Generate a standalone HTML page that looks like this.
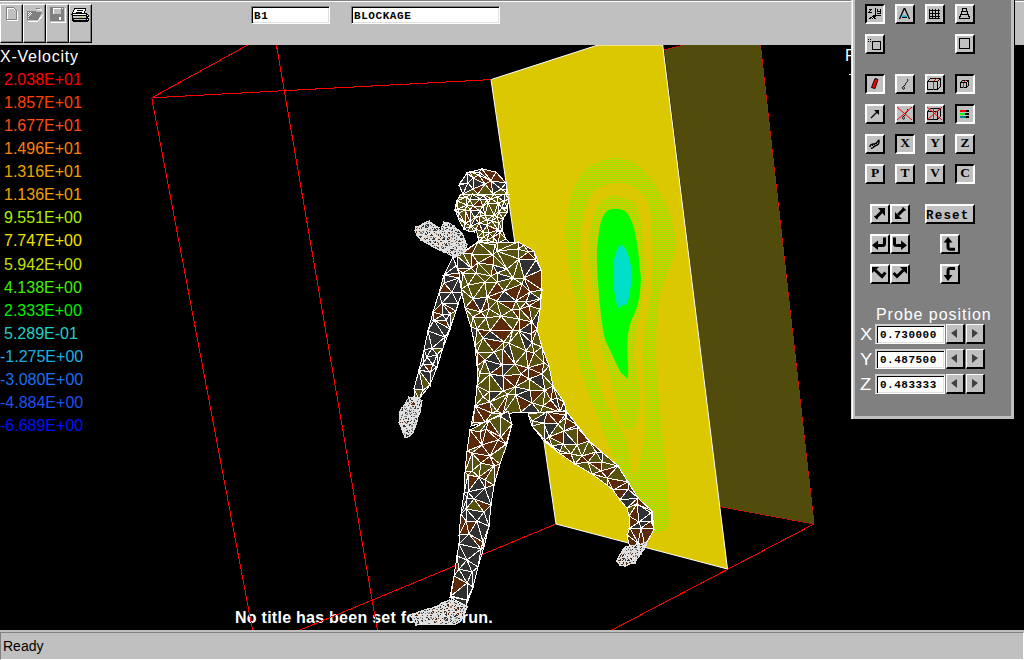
<!DOCTYPE html>
<html><head><meta charset="utf-8">
<style>
*{margin:0;padding:0;box-sizing:border-box}
html,body{width:1024px;height:660px;overflow:hidden;background:#000;font-family:"Liberation Sans",sans-serif}
.a{position:absolute}
#tb{left:0;top:0;width:1024px;height:45px;background:#c0c0c0;border-top:1px solid #808080}
#tb:before{content:"";position:absolute;left:0;top:0;width:1024px;height:1px;background:#fff}
.tbtn{position:absolute;top:3px;width:23px;height:39px;background:#c0c0c0;border-top:1px solid #fff;border-left:1px solid #fff;border-right:1px solid #000;border-bottom:1px solid #000}
.tbtn:after{content:"";position:absolute;right:0;bottom:0;left:0;top:0;border-right:1px solid #808080;border-bottom:1px solid #808080}
.fld{position:absolute;top:5px;height:18px;background:#fff;border-top:1px solid #808080;border-left:1px solid #808080;border-right:1px solid #fff;border-bottom:1px solid #fff;box-shadow:inset 1px 1px 0 #000,inset -1px -1px 0 #dfdfdf;font-family:"Liberation Mono",monospace;font-weight:bold;font-size:11px;line-height:14px;padding-left:2px;padding-top:2px;letter-spacing:0.57px;color:#000}
#sb{left:0;top:630px;width:1024px;height:30px;background:#c0c0c0;border-top:2px solid #c0c0c0}
#sbf{position:absolute;left:0;top:0;width:1024px;height:28px;border-top:1px solid #808080;border-left:1px solid #808080;border-right:1px solid #fff;border-bottom:1px solid #fff;font-size:14px;line-height:16px;padding:5px 0 0 2px;color:#000}
.lg{position:absolute;left:0;font-size:16px;line-height:18px;white-space:nowrap}
#pn{left:851px;top:0;width:163px;height:419px;background:#808080;border-left:1px solid #dfdfdf;border-top:1px solid #dfdfdf;border-right:3px solid #c0c0c0;border-bottom:3px solid #c0c0c0}
.b{position:absolute;width:20px;height:20px;background:#c0c0c0;border-top:2px solid #fff;border-left:2px solid #fff;border-right:2px solid #000;border-bottom:2px solid #000}
.p{border-top:2px solid #000;border-left:2px solid #000;border-right:2px solid #fff;border-bottom:2px solid #fff}
.lt{font-family:"Liberation Serif",serif;font-weight:bold;font-size:13px;line-height:16px;text-align:center;color:#000}
.pf{width:70px;height:20px;background:#fff;border-top:2px solid #d0d0d0;border-left:2px solid #d0d0d0;border-right:1px solid #fff;border-bottom:1px solid #fff;box-shadow:inset 1px 1px 0 #000,inset -1px -1px 0 #dfdfdf;font-family:"Liberation Mono",monospace;font-weight:bold;font-size:11px;line-height:16px;padding-left:3px;padding-top:1px;letter-spacing:0.5px;color:#000}
.sp{width:19px;height:20px;background:#c0c0c0;border-top:1px solid #fff;border-left:1px solid #fff;border-right:2px solid #000;border-bottom:2px solid #000}

</style></head><body>
<div class="a" style="left:235px;top:609px;color:#fff;font-weight:bold;font-size:16px;line-height:18px;letter-spacing:0.26px;white-space:nowrap">No title has been set for this run.</div>
<svg class="a" id="sc" width="1024" height="660" viewBox="0 0 1024 660" style="left:0;top:0">
<g shape-rendering="crispEdges" stroke="#ff0000" stroke-width="1" fill="none">
<path d="M151.7 97.8L247.8 45M151.7 97.8L491 79.6M151.7 97.8L252.5 630M276.4 45L377.3 630M300 630L556 524M612 630L814 524M720 506.6L814 524M760.4 45L814 524M664.3 50L684 45"/>
</g>
<polygon points="664.3,50 684,45 760.4,45 814,524 720,506.6" fill="#514c0c"/>
<pattern id="dth" patternUnits="userSpaceOnUse" width="2" height="2"><rect width="2" height="2" fill="#dcc800"/><rect width="1" height="1" fill="#98e000"/></pattern>
<clipPath id="yc"><polygon points="491,79.6 598,45 662.7,45 727.5,569 556,524"/></clipPath>
<polygon points="491,79.6 598,45 662.7,45 727.5,569 556,524" fill="#dcc800"/>
<g clip-path="url(#yc)">
<polygon fill="url(#dth)" points="613.0,158.0 615.8,157.9 618.7,158.1 621.5,158.4 624.4,158.9 627.2,159.7 629.9,160.6 632.5,161.7 635.0,163.0 637.4,164.5 639.7,166.2 641.9,168.2 644.0,170.3 646.1,172.6 648.1,175.0 650.1,177.5 652.0,180.0 653.9,182.7 655.9,185.5 657.7,188.4 659.6,191.5 661.3,194.6 663.0,197.8 664.6,200.9 666.0,204.0 667.3,207.1 668.6,210.4 669.7,213.7 670.8,217.0 671.7,220.2 672.6,223.4 673.3,226.3 674.0,229.0 674.6,231.4 675.1,233.6 675.5,235.6 675.8,237.5 676.0,239.3 676.1,241.1 676.1,243.0 676.0,245.0 675.8,247.1 675.5,249.2 675.1,251.3 674.6,253.4 674.0,255.5 673.4,257.7 672.7,259.8 672.0,262.0 671.3,264.2 670.4,266.4 669.6,268.6 668.6,270.8 667.7,273.1 666.8,275.3 665.8,277.6 665.0,280.0 664.2,282.4 663.3,284.8 662.5,287.3 661.7,289.8 660.9,292.3 660.2,294.9 659.6,297.4 659.0,300.0 658.6,302.5 658.2,305.0 657.9,307.5 657.7,309.9 657.5,312.5 657.3,315.2 657.2,318.0 657.0,321.0 656.8,324.3 656.6,327.8 656.5,331.5 656.3,335.2 656.2,339.1 656.1,342.8 656.0,346.5 656.0,350.0 656.0,353.3 656.1,356.5 656.2,359.7 656.3,362.8 656.5,365.8 656.6,368.8 656.8,371.9 657.0,375.0 657.2,378.0 657.4,380.7 657.5,383.3 657.8,385.9 658.0,388.8 658.3,392.0 658.6,395.7 659.0,400.0 659.5,405.1 660.1,410.7 660.7,416.9 661.4,423.4 662.1,430.2 662.8,436.9 663.4,443.6 664.0,450.0 664.6,456.4 665.2,463.1 665.7,469.8 666.3,476.5 666.8,483.0 667.3,489.2 667.7,494.9 668.0,500.0 668.3,504.5 668.7,508.7 669.0,512.4 669.2,515.8 669.3,518.8 669.2,521.5 668.8,523.9 668.0,526.0 666.8,527.9 665.1,529.5 663.2,530.9 661.0,531.9 658.7,532.5 656.4,532.8 654.1,532.6 652.0,532.0 650.0,530.9 648.0,529.2 646.0,527.2 643.9,524.7 641.9,521.9 639.9,518.8 638.0,515.5 636.0,512.0 634.1,508.2 632.2,504.0 630.3,499.5 628.5,494.8 626.7,489.8 624.8,484.9 622.9,479.9 621.0,475.0 619.0,470.1 617.0,465.2 615.0,460.1 613.0,455.1 611.0,450.0 609.0,444.9 607.0,439.9 605.0,435.0 603.0,430.0 601.0,425.0 599.0,419.9 596.9,414.8 595.0,409.9 593.2,405.3 591.5,400.9 590.0,397.0 588.7,393.6 587.7,390.7 586.7,388.1 585.9,385.8 585.2,383.5 584.5,381.2 583.8,378.7 583.0,376.0 582.2,373.2 581.3,370.4 580.5,367.7 579.7,364.8 578.9,361.7 578.2,358.3 577.6,354.4 577.0,350.0 576.6,344.8 576.3,338.9 576.2,332.5 576.1,325.8 575.9,318.9 575.8,312.2 575.5,305.8 575.0,300.0 574.3,294.6 573.5,289.5 572.5,284.7 571.5,279.9 570.5,275.4 569.5,270.9 568.7,266.4 568.0,262.0 567.5,257.6 567.0,253.3 566.6,249.1 566.3,245.0 566.1,240.9 566.0,236.9 565.9,232.9 566.0,229.0 566.2,225.0 566.5,221.0 566.9,217.0 567.4,213.1 567.9,209.3 568.6,205.7 569.3,202.2 570.0,199.0 570.8,196.1 571.6,193.4 572.5,190.8 573.5,188.5 574.5,186.3 575.6,184.1 576.8,182.1 578.0,180.0 579.2,178.0 580.5,176.0 581.7,174.1 583.1,172.3 584.5,170.6 586.1,169.0 587.9,167.4 590.0,166.0 592.4,164.6 595.0,163.3 597.9,162.0 600.9,160.8 604.0,159.8 607.1,158.9 610.1,158.3"/>
<polygon fill="#dcc800" points="613.0,183.0 615.2,182.7 617.4,182.6 619.6,182.6 621.8,182.8 623.9,183.2 626.0,183.6 628.0,184.3 630.0,185.0 631.9,185.9 633.9,187.0 635.8,188.3 637.7,189.8 639.5,191.3 641.1,192.8 642.7,194.4 644.0,196.0 645.2,197.6 646.2,199.1 647.0,200.8 647.8,202.4 648.4,204.2 649.0,206.0 649.5,207.9 650.0,210.0 650.5,212.0 650.8,213.9 651.1,215.7 651.4,217.8 651.6,220.0 651.7,222.8 651.9,226.0 652.0,230.0 652.1,234.9 652.3,240.6 652.4,246.9 652.5,253.7 652.5,260.6 652.4,267.4 652.3,274.0 652.0,280.0 651.6,285.6 651.0,291.2 650.3,296.6 649.5,301.8 648.7,306.9 647.9,311.8 647.1,316.5 646.5,321.0 645.9,325.2 645.3,329.2 644.7,332.9 644.1,336.4 643.6,339.9 643.2,343.2 642.8,346.6 642.6,350.0 642.5,353.4 642.6,356.8 642.8,360.1 643.0,363.3 643.3,366.5 643.6,369.7 643.8,372.9 644.0,376.0 644.2,379.0 644.3,381.8 644.5,384.4 644.6,387.1 644.8,389.9 644.9,392.9 645.0,396.2 645.0,400.0 645.0,404.3 645.1,409.0 645.2,414.0 645.2,419.3 645.1,424.7 644.9,430.0 644.6,435.1 644.0,440.0 643.2,445.1 642.1,450.7 640.8,456.6 639.4,462.2 638.0,467.2 636.6,471.3 635.2,474.0 634.0,475.0 633.0,473.9 632.0,471.1 631.2,466.8 630.4,461.6 629.5,455.8 628.5,450.0 627.4,444.6 626.0,440.0 624.3,435.9 622.3,431.8 620.1,427.6 617.9,423.6 615.6,419.8 613.5,416.2 611.6,412.9 610.0,410.0 608.8,407.8 608.0,406.4 607.4,405.4 606.9,404.6 606.5,403.6 605.9,402.2 605.1,400.1 604.0,397.0 602.5,392.8 600.6,387.7 598.6,382.0 596.4,375.8 594.2,369.3 592.2,362.8 590.4,356.3 589.0,350.0 588.0,343.8 587.2,337.5 586.7,331.0 586.3,324.6 586.0,318.1 585.7,311.9 585.4,305.8 585.0,300.0 584.5,294.4 583.9,288.9 583.3,283.5 582.8,278.2 582.2,273.2 581.7,268.5 581.3,264.1 581.0,260.0 580.8,256.4 580.6,253.4 580.5,250.7 580.5,248.2 580.5,245.9 580.6,243.5 580.8,240.9 581.0,238.0 581.3,234.7 581.6,231.2 581.9,227.5 582.4,223.8 582.9,220.1 583.5,216.5 584.2,213.1 585.0,210.0 585.9,207.1 586.9,204.4 588.0,201.7 589.1,199.2 590.4,196.9 591.8,194.8 593.3,192.8 595.0,191.0 596.9,189.4 599.0,188.0 601.2,186.8 603.6,185.7 606.0,184.8 608.4,184.0 610.7,183.4"/>
<polygon fill="url(#dth)" points="613.0,196.0 615.0,196.0 617.2,196.2 619.7,196.4 622.2,196.9 624.7,197.4 627.0,198.2 629.2,199.0 631.0,200.0 632.5,201.0 633.8,202.1 634.9,203.2 635.8,204.4 636.7,206.0 637.4,207.9 638.2,210.2 639.0,213.0 639.8,216.5 640.6,220.7 641.3,225.4 641.9,230.4 642.5,235.6 643.1,240.7 643.6,245.5 644.0,250.0 644.3,254.2 644.6,258.2 644.8,262.2 645.0,266.1 645.1,269.8 645.1,273.4 645.1,276.8 645.0,280.0 644.9,282.8 644.6,285.0 644.4,286.9 644.1,288.8 643.7,290.7 643.2,293.1 642.6,296.1 642.0,300.0 641.2,305.0 640.1,311.0 638.8,317.6 637.6,324.6 636.3,331.7 635.3,338.5 634.5,344.7 634.0,350.0 633.9,354.4 634.2,358.2 634.8,361.6 635.4,364.6 636.2,367.5 636.9,370.2 637.6,373.0 638.0,376.0 638.3,379.1 638.6,382.1 638.8,385.1 638.9,388.1 639.0,391.0 639.1,394.0 639.1,397.0 639.0,400.0 638.9,403.2 638.8,406.8 638.7,410.4 638.4,414.0 638.1,417.4 637.6,420.5 636.9,423.1 636.0,425.0 634.8,426.5 633.2,427.9 631.5,429.0 629.6,429.6 627.6,429.7 625.6,429.0 623.7,427.5 622.0,425.0 620.4,421.1 618.8,415.7 617.2,409.2 615.6,402.1 614.1,394.8 612.7,387.8 611.3,381.4 610.0,376.0 608.8,371.8 607.7,368.4 606.7,365.6 605.8,363.1 604.8,360.5 603.9,357.6 603.0,354.2 602.0,350.0 601.0,344.8 599.9,339.0 598.8,332.6 597.8,325.9 596.7,319.1 595.7,312.4 594.8,305.9 594.0,300.0 593.3,294.4 592.6,288.9 592.1,283.5 591.5,278.2 591.1,273.2 590.7,268.5 590.3,264.1 590.0,260.0 589.7,256.4 589.5,253.3 589.3,250.5 589.2,247.9 589.2,245.5 589.2,243.1 589.3,240.7 589.5,238.0 589.8,235.1 590.2,232.1 590.7,229.1 591.2,226.0 591.8,223.0 592.5,220.1 593.2,217.5 594.0,215.0 594.8,212.8 595.7,210.7 596.6,208.7 597.6,206.9 598.6,205.2 599.7,203.7 600.8,202.3 602.0,201.0 603.2,199.9 604.4,198.9 605.6,198.1 606.9,197.4 608.2,196.8 609.7,196.4 611.3,196.1"/>
<polygon fill="#00ff00" points="614.0,209.0 615.3,209.0 616.7,209.0 618.1,209.1 619.6,209.2 621.1,209.5 622.5,209.9 623.8,210.4 625.0,211.0 626.0,211.8 626.9,212.7 627.7,213.8 628.5,215.0 629.2,216.2 629.8,217.5 630.4,218.8 631.0,220.0 631.5,221.1 632.0,222.2 632.5,223.2 632.8,224.3 633.2,225.5 633.6,226.8 634.0,228.3 634.4,230.0 634.9,232.0 635.3,234.3 635.8,236.8 636.3,239.4 636.8,242.1 637.2,244.8 637.6,247.4 638.0,250.0 638.3,252.6 638.6,255.2 638.9,257.9 639.2,260.6 639.4,263.2 639.6,265.7 639.8,268.0 640.0,270.0 640.2,271.7 640.4,273.0 640.5,274.0 640.6,275.0 640.8,276.0 640.8,277.0 640.8,278.3 640.8,280.0 640.7,282.1 640.6,284.4 640.4,287.0 640.1,289.7 639.9,292.4 639.6,295.1 639.2,297.7 638.8,300.0 638.3,302.2 637.8,304.3 637.1,306.4 636.5,308.4 635.8,310.3 635.1,312.0 634.5,313.6 634.0,315.0 633.5,316.1 633.1,316.9 632.7,317.6 632.4,318.1 632.0,318.6 631.7,319.1 631.4,319.9 631.0,321.0 630.6,322.4 630.2,323.9 629.8,325.6 629.4,327.4 628.9,329.3 628.6,331.2 628.3,333.1 628.0,335.0 627.8,336.7 627.7,338.4 627.5,340.0 627.5,341.7 627.4,343.5 627.4,345.4 627.4,347.6 627.4,350.0 627.4,353.0 627.6,356.5 627.7,360.3 627.9,364.3 628.1,368.1 628.1,371.6 628.1,374.4 628.0,376.5 627.7,377.7 627.3,378.2 626.8,378.1 626.3,377.7 625.7,377.0 625.1,376.2 624.5,375.5 624.0,375.0 623.5,374.7 623.1,374.6 622.8,374.4 622.4,374.2 621.9,373.9 621.4,373.3 620.8,372.3 620.0,371.0 619.0,369.1 617.8,366.8 616.5,364.1 615.1,361.2 613.7,358.2 612.4,355.2 611.1,352.5 610.0,350.0 609.0,348.0 608.2,346.3 607.4,344.8 606.7,343.4 606.0,341.8 605.3,340.0 604.7,337.8 604.0,335.0 603.3,331.6 602.7,327.8 602.1,323.6 601.5,319.1 600.9,314.4 600.4,309.6 599.9,304.8 599.4,300.0 599.0,295.1 598.6,289.9 598.2,284.5 597.8,279.1 597.6,273.8 597.3,268.7 597.1,264.1 597.0,260.0 596.9,256.5 597.0,253.5 597.0,250.9 597.2,248.6 597.3,246.5 597.5,244.4 597.8,242.3 598.0,240.0 598.3,237.6 598.6,235.2 598.9,232.8 599.2,230.4 599.6,228.1 600.1,225.9 600.5,223.9 601.0,222.0 601.5,220.3 602.0,218.8 602.6,217.4 603.2,216.1 603.8,214.9 604.5,213.8 605.2,212.9 606.0,212.0 606.8,211.3 607.7,210.6 608.6,210.1 609.6,209.8 610.6,209.5 611.7,209.2 612.8,209.1"/>
<polygon fill="#00e0c8" points="621.0,245.0 621.6,245.1 622.2,245.4 622.8,245.8 623.5,246.4 624.2,247.2 624.8,248.0 625.4,249.0 626.0,250.0 626.6,251.2 627.1,252.5 627.7,253.9 628.2,255.5 628.7,257.1 629.2,258.8 629.6,260.4 630.0,262.0 630.4,263.6 630.7,265.1 631.0,266.7 631.3,268.3 631.6,269.9 631.7,271.5 631.9,273.2 631.9,275.0 631.9,276.9 631.7,278.8 631.5,280.9 631.3,282.9 631.0,285.0 630.6,287.0 630.3,288.9 630.0,290.8 629.7,292.6 629.4,294.5 629.0,296.3 628.7,298.1 628.3,299.8 627.9,301.3 627.5,302.6 627.0,303.6 626.5,304.3 625.9,304.7 625.2,304.9 624.6,304.9 623.9,304.9 623.2,304.8 622.6,304.9 622.0,305.0 621.5,305.4 621.0,306.0 620.5,306.7 620.0,307.4 619.5,308.0 619.1,308.3 618.6,308.1 618.1,307.5 617.6,306.3 617.0,304.5 616.4,302.3 615.9,299.8 615.3,297.3 614.8,294.7 614.4,292.2 614.0,290.0 613.7,288.0 613.5,286.1 613.4,284.2 613.3,282.3 613.2,280.5 613.2,278.7 613.2,276.9 613.2,275.0 613.2,273.1 613.2,271.1 613.3,269.2 613.4,267.2 613.5,265.3 613.6,263.4 613.8,261.6 614.0,260.0 614.3,258.5 614.6,257.0 614.9,255.7 615.3,254.4 615.7,253.2 616.1,252.0 616.6,251.0 617.0,250.0 617.4,249.1 617.9,248.2 618.4,247.3 618.9,246.6 619.4,245.9 619.9,245.4 620.4,245.1"/>
</g>
<polygon points="491,79.6 598,45 662.7,45 727.5,569 556,524" fill="none" stroke="#fff" stroke-width="1"/>

<g id="fig" shape-rendering="crispEdges"><path fill="#5a2a0a" d="M496 172L491 181L482 169ZM506 183L491 181L496 172ZM470 172L467 173L482 169ZM470 172L473 178L467 173ZM493 194L485 184L491 181ZM491 181L479 172L482 169ZM473 189L485 184L478 194ZM501 189L506 190L508 194ZM479 175L485 184L473 178ZM485 184L479 175L491 181Z"/><path fill="#303030" d="M467 173L460 183L459 185ZM468 183L463 194L459 185ZM460 183L468 183L459 185ZM468 183L460 183L467 173ZM473 178L468 183L467 173ZM501 189L491 181L506 183ZM501 189L493 194L491 181ZM479 172L470 172L482 169ZM468 183L473 189L463 194ZM485 184L473 189L473 178ZM473 189L468 183L473 178ZM506 190L506 183L508 194ZM506 190L501 189L506 183ZM479 172L479 175L470 172ZM479 175L479 172L491 181Z"/><path fill="#585210" d="M485 184L493 194L478 194ZM493 194L501 189L508 194ZM463 194L473 189L478 194ZM470 172L479 175L473 178Z"/><path fill="none" stroke="#ffffff" stroke-width="1" d="M496 172L491 181L482 169ZM506 183L491 181L496 172ZM470 172L467 173L482 169ZM470 172L473 178L467 173ZM493 194L485 184L491 181ZM491 181L479 172L482 169ZM473 189L485 184L478 194ZM501 189L506 190L508 194ZM479 175L485 184L473 178ZM485 184L479 175L491 181ZM467 173L460 183L459 185ZM468 183L463 194L459 185ZM460 183L468 183L459 185ZM468 183L460 183L467 173ZM473 178L468 183L467 173ZM501 189L491 181L506 183ZM501 189L493 194L491 181ZM479 172L470 172L482 169ZM468 183L473 189L463 194ZM485 184L473 189L473 178ZM473 189L468 183L473 178ZM506 190L506 183L508 194ZM506 190L501 189L506 183ZM479 172L479 175L470 172ZM479 175L479 172L491 181ZM485 184L493 194L478 194ZM493 194L501 189L508 194ZM463 194L473 189L478 194ZM470 172L479 175L473 178Z"/><path fill="#303030" d="M498 243L506 239L509 242ZM492 221L487 225L487 220ZM480 199L470 200L472 194ZM504 201L497 197L505 194ZM502 208L499 212L498 203ZM502 208L504 201L507 207ZM479 223L487 225L483 232ZM498 230L500 233L493 237ZM500 233L498 230L502 230ZM483 196L487 200L480 199ZM471 226L468 231L464 229ZM475 218L479 223L471 226ZM480 211L483 206L485 215ZM475 218L470 210L480 211Z"/><path fill="#585210" d="M507 209L507 207L509 199ZM507 207L504 201L509 199ZM509 199L504 201L505 194ZM458 209L457 201L467 205ZM484 237L478 237L483 232ZM478 237L484 237L479 241ZM479 241L487 240L487 243ZM484 237L487 240L479 241ZM498 243L493 242L493 237ZM493 242L498 243L487 243ZM493 242L487 240L493 237ZM487 240L493 242L487 243ZM498 243L500 233L506 239ZM467 205L470 200L473 206ZM480 216L485 215L487 220ZM488 203L491 199L498 203ZM494 194L491 199L483 194ZM470 200L480 199L473 206ZM497 197L504 201L498 203ZM491 199L497 197L498 203ZM458 209L456 204L457 201ZM456 204L459 197L457 201ZM458 209L459 213L455 210ZM503 219L499 212L507 212ZM503 219L502 230L499 223ZM492 221L497 217L499 223ZM503 219L497 217L499 212ZM502 208L507 209L507 212ZM499 212L502 208L507 212ZM507 209L502 208L507 207ZM504 201L502 208L498 203ZM479 223L480 216L487 220ZM487 225L479 223L487 220ZM498 230L487 225L492 221ZM498 230L492 221L499 223ZM502 230L498 230L499 223ZM472 194L466 197L461 194ZM470 200L466 197L472 194ZM466 197L459 197L461 194ZM466 197L470 200L467 205ZM457 201L466 197L467 205ZM459 197L466 197L457 201ZM480 211L485 215L480 216ZM483 196L472 194L483 194ZM483 196L480 199L472 194ZM487 200L483 196L483 194ZM497 197L494 194L505 194ZM494 194L491 199L494 194ZM494 194L497 197L491 199ZM474 232L468 231L471 226ZM465 210L458 209L467 205ZM465 210L459 213L458 209ZM459 220L465 223L464 229ZM465 210L465 223L459 213ZM465 223L471 226L464 229ZM494 215L492 221L487 220ZM494 215L497 217L492 221ZM485 215L494 215L487 220ZM497 217L494 215L499 212ZM494 215L485 215L488 203ZM494 215L488 203L498 203ZM499 212L494 215L498 203ZM478 237L476 229L483 232ZM476 229L474 232L471 226ZM479 223L476 229L471 226ZM470 221L475 218L471 226ZM475 218L480 211L480 216ZM489 233L498 230L493 237ZM487 225L489 233L483 232ZM489 233L484 237L483 232ZM489 233L487 240L484 237ZM485 215L483 206L488 203ZM483 206L487 200L488 203ZM487 200L483 206L480 199ZM483 206L480 211L473 206ZM458 217L465 223L459 220ZM459 213L458 217L455 210ZM470 210L475 218L470 221ZM470 210L467 205L473 206ZM470 210L465 210L467 205Z"/><path fill="#5a2a0a" d="M478 237L479 241L478 241ZM500 233L498 243L493 237ZM500 233L502 230L506 239ZM456 204L458 209L455 210ZM497 217L503 219L499 223ZM487 200L491 199L488 203ZM491 199L487 200L483 194ZM494 194L494 194L505 194ZM465 223L465 210L470 221ZM465 223L470 221L471 226ZM476 229L479 223L483 232ZM479 223L475 218L480 216ZM498 230L489 233L487 225ZM487 240L489 233L493 237ZM480 199L483 206L473 206ZM465 223L458 217L459 213ZM465 210L470 210L470 221ZM480 211L470 210L473 206Z"/><path fill="none" stroke="#ffffff" stroke-width="1" d="M498 243L506 239L509 242ZM492 221L487 225L487 220ZM480 199L470 200L472 194ZM504 201L497 197L505 194ZM502 208L499 212L498 203ZM502 208L504 201L507 207ZM479 223L487 225L483 232ZM498 230L500 233L493 237ZM500 233L498 230L502 230ZM483 196L487 200L480 199ZM471 226L468 231L464 229ZM475 218L479 223L471 226ZM480 211L483 206L485 215ZM475 218L470 210L480 211ZM507 209L507 207L509 199ZM507 207L504 201L509 199ZM509 199L504 201L505 194ZM458 209L457 201L467 205ZM484 237L478 237L483 232ZM478 237L484 237L479 241ZM479 241L487 240L487 243ZM484 237L487 240L479 241ZM498 243L493 242L493 237ZM493 242L498 243L487 243ZM493 242L487 240L493 237ZM487 240L493 242L487 243ZM498 243L500 233L506 239ZM467 205L470 200L473 206ZM480 216L485 215L487 220ZM488 203L491 199L498 203ZM494 194L491 199L483 194ZM470 200L480 199L473 206ZM497 197L504 201L498 203ZM491 199L497 197L498 203ZM458 209L456 204L457 201ZM456 204L459 197L457 201ZM458 209L459 213L455 210ZM503 219L499 212L507 212ZM503 219L502 230L499 223ZM492 221L497 217L499 223ZM503 219L497 217L499 212ZM502 208L507 209L507 212ZM499 212L502 208L507 212ZM507 209L502 208L507 207ZM504 201L502 208L498 203ZM479 223L480 216L487 220ZM487 225L479 223L487 220ZM498 230L487 225L492 221ZM498 230L492 221L499 223ZM502 230L498 230L499 223ZM472 194L466 197L461 194ZM470 200L466 197L472 194ZM466 197L459 197L461 194ZM466 197L470 200L467 205ZM457 201L466 197L467 205ZM459 197L466 197L457 201ZM480 211L485 215L480 216ZM483 196L472 194L483 194ZM483 196L480 199L472 194ZM487 200L483 196L483 194ZM497 197L494 194L505 194ZM494 194L491 199L494 194ZM494 194L497 197L491 199ZM474 232L468 231L471 226ZM465 210L458 209L467 205ZM465 210L459 213L458 209ZM459 220L465 223L464 229ZM465 210L465 223L459 213ZM465 223L471 226L464 229ZM494 215L492 221L487 220ZM494 215L497 217L492 221ZM485 215L494 215L487 220ZM497 217L494 215L499 212ZM494 215L485 215L488 203ZM494 215L488 203L498 203ZM499 212L494 215L498 203ZM478 237L476 229L483 232ZM476 229L474 232L471 226ZM479 223L476 229L471 226ZM470 221L475 218L471 226ZM475 218L480 211L480 216ZM489 233L498 230L493 237ZM487 225L489 233L483 232ZM489 233L484 237L483 232ZM489 233L487 240L484 237ZM485 215L483 206L488 203ZM483 206L487 200L488 203ZM487 200L483 206L480 199ZM483 206L480 211L473 206ZM458 217L465 223L459 220ZM459 213L458 217L455 210ZM470 210L475 218L470 221ZM470 210L467 205L473 206ZM470 210L465 210L467 205ZM478 237L479 241L478 241ZM500 233L498 243L493 237ZM500 233L502 230L506 239ZM456 204L458 209L455 210ZM497 217L503 219L499 223ZM487 200L491 199L488 203ZM491 199L487 200L483 194ZM494 194L494 194L505 194ZM465 223L465 210L470 221ZM465 223L470 221L471 226ZM476 229L479 223L483 232ZM479 223L475 218L480 216ZM498 230L489 233L487 225ZM487 240L489 233L493 237ZM480 199L483 206L473 206ZM465 223L458 217L459 213ZM465 210L470 210L470 221ZM480 211L470 210L473 206Z"/><path fill="#303030" d="M457 256L471 268L457 269ZM463 253L457 256L478 242ZM463 273L461 289L457 269ZM537 329L532 322L540 309ZM532 403L540 413L521 412ZM516 301L497 301L504 291ZM483 338L490 331L504 342ZM515 364L503 349L509 343ZM487 297L481 312L473 299ZM530 390L532 403L516 395ZM560 412L564 402L566 410ZM515 387L530 390L516 395ZM503 391L490 402L489 392ZM485 360L494 352L502 365ZM490 374L485 360L502 365ZM524 278L536 260L541 270ZM536 260L524 278L519 259ZM530 292L540 299L526 302ZM507 269L497 273L493 265ZM513 278L497 282L497 273ZM531 334L519 331L532 322ZM471 327L477 329L475 346ZM551 400L557 398L560 412ZM503 376L503 391L490 374ZM515 364L503 376L502 365ZM497 251L493 255L495 245ZM530 292L522 284L524 278ZM519 331L532 343L526 351ZM531 334L532 343L519 331ZM529 379L542 374L545 390Z"/><path fill="#585210" d="M483 338L477 352L475 346ZM521 412L503 414L516 395ZM483 338L494 352L477 352ZM463 253L471 268L457 256ZM463 253L472 254L471 268ZM461 289L463 273L468 285ZM532 322L529 306L540 309ZM473 317L471 327L465 308ZM461 289L473 299L465 308ZM473 299L461 289L468 285ZM485 282L473 299L468 285ZM503 414L508 394L516 395ZM473 422L485 422L471 426ZM477 366L480 373L477 386ZM490 374L489 392L477 386ZM480 373L490 374L477 386ZM487 297L473 299L485 282ZM476 273L485 282L468 285ZM476 273L463 273L471 268ZM463 273L476 273L468 285ZM498 242L495 245L478 242ZM493 255L472 254L478 242ZM495 245L493 255L478 242ZM487 297L497 301L489 309ZM520 309L532 322L519 319ZM520 309L516 301L526 302ZM516 301L520 309L512 310ZM494 352L503 349L502 365ZM503 349L494 352L504 342ZM509 343L503 349L504 342ZM509 343L519 331L526 351ZM515 364L509 343L526 351ZM528 368L515 364L526 351ZM481 312L473 317L465 308ZM564 402L557 398L553 386ZM490 402L508 394L497 411ZM508 394L515 387L516 395ZM490 374L503 391L489 392ZM490 402L503 391L508 394ZM503 391L515 387L508 394ZM477 366L485 360L480 373ZM485 360L490 374L480 373ZM494 352L485 360L477 352ZM497 282L487 297L485 282ZM476 273L491 276L485 282ZM491 276L497 282L485 282ZM497 282L491 276L497 273ZM540 299L530 292L542 290ZM528 252L518 249L524 245ZM518 249L528 252L519 259ZM493 255L478 263L472 254ZM491 276L478 263L493 265ZM478 263L491 276L476 273ZM493 255L507 269L493 265ZM497 282L513 278L504 291ZM524 278L513 278L519 259ZM513 278L507 269L519 259ZM507 269L513 278L497 273ZM497 301L501 316L489 309ZM501 316L497 301L512 310ZM501 316L512 310L519 319ZM513 330L509 343L504 342ZM513 330L519 331L509 343ZM513 330L501 316L519 319ZM473 317L477 329L471 327ZM477 329L483 338L475 346ZM529 379L545 390L530 390ZM515 387L529 379L530 390ZM490 402L483 397L489 392ZM483 397L490 402L475 406ZM489 392L483 397L477 386ZM483 397L475 406L477 386ZM492 413L490 402L497 411ZM503 414L492 413L497 411ZM492 413L503 414L485 422ZM503 376L515 364L521 374ZM498 242L497 251L495 245ZM497 251L507 269L493 255ZM497 251L498 242L518 242ZM518 249L497 251L518 242ZM497 251L518 249L519 259ZM507 269L497 251L519 259ZM513 278L522 284L504 291ZM522 284L513 278L524 278ZM501 316L486 318L489 309ZM486 318L501 316L490 331ZM486 318L481 312L489 309ZM477 329L486 318L490 331ZM486 318L477 329L473 317ZM532 343L537 329L542 347ZM545 390L543 406L532 403ZM551 400L543 406L545 390ZM532 403L543 406L540 413ZM543 406L560 412L540 413ZM545 390L542 374L553 386ZM542 374L549 366L553 386ZM542 374L544 363L549 366ZM544 363L534 353L542 347ZM534 353L532 343L542 347ZM532 343L534 353L526 351ZM534 353L544 363L528 368Z"/><path fill="#5a2a0a" d="M494 352L483 338L504 342ZM472 254L463 253L478 242ZM471 268L463 273L457 269ZM532 403L521 412L516 395ZM508 394L503 414L497 411ZM473 422L475 406L485 422ZM475 406L473 422L471 426ZM477 352L477 366L475 346ZM528 252L524 245L534 251ZM542 290L524 278L541 270ZM497 301L487 297L504 291ZM497 301L516 301L512 310ZM540 299L529 306L526 302ZM540 299L542 290L540 309ZM529 306L540 299L540 309ZM512 310L520 309L519 319ZM532 322L520 309L529 306ZM529 306L520 309L526 302ZM532 322L519 331L519 319ZM503 349L515 364L502 365ZM515 364L528 368L521 374ZM473 299L481 312L465 308ZM481 312L487 297L489 309ZM530 390L545 390L532 403ZM557 398L564 402L560 412ZM485 360L477 366L477 352ZM528 252L536 260L519 259ZM541 270L536 260L534 251ZM536 260L528 252L534 251ZM487 297L497 282L504 291ZM497 273L491 276L493 265ZM530 292L524 278L542 290ZM516 301L530 292L526 302ZM524 245L518 249L518 242ZM478 263L493 255L493 265ZM472 254L478 263L471 268ZM478 263L476 273L471 268ZM531 334L532 322L537 329ZM490 331L513 330L504 342ZM501 316L513 330L490 331ZM519 331L513 330L519 319ZM477 329L490 331L483 338ZM557 398L551 400L553 386ZM551 400L545 390L553 386ZM528 368L529 379L521 374ZM529 379L515 387L521 374ZM475 406L492 413L485 422ZM490 402L492 413L475 406ZM503 391L503 376L515 387ZM515 387L503 376L521 374ZM503 376L490 374L502 365ZM522 284L530 292L516 301ZM522 284L516 301L504 291ZM481 312L486 318L473 317ZM532 343L531 334L537 329ZM549 366L544 363L542 347ZM543 406L551 400L560 412ZM542 374L529 379L528 368ZM544 363L542 374L528 368ZM534 353L528 368L526 351Z"/><path fill="none" stroke="#ffffff" stroke-width="1" d="M457 256L471 268L457 269ZM463 253L457 256L478 242ZM463 273L461 289L457 269ZM537 329L532 322L540 309ZM532 403L540 413L521 412ZM516 301L497 301L504 291ZM483 338L490 331L504 342ZM515 364L503 349L509 343ZM487 297L481 312L473 299ZM530 390L532 403L516 395ZM560 412L564 402L566 410ZM515 387L530 390L516 395ZM503 391L490 402L489 392ZM485 360L494 352L502 365ZM490 374L485 360L502 365ZM524 278L536 260L541 270ZM536 260L524 278L519 259ZM530 292L540 299L526 302ZM507 269L497 273L493 265ZM513 278L497 282L497 273ZM531 334L519 331L532 322ZM471 327L477 329L475 346ZM551 400L557 398L560 412ZM503 376L503 391L490 374ZM515 364L503 376L502 365ZM497 251L493 255L495 245ZM530 292L522 284L524 278ZM519 331L532 343L526 351ZM531 334L532 343L519 331ZM529 379L542 374L545 390ZM483 338L477 352L475 346ZM521 412L503 414L516 395ZM483 338L494 352L477 352ZM463 253L471 268L457 256ZM463 253L472 254L471 268ZM461 289L463 273L468 285ZM532 322L529 306L540 309ZM473 317L471 327L465 308ZM461 289L473 299L465 308ZM473 299L461 289L468 285ZM485 282L473 299L468 285ZM503 414L508 394L516 395ZM473 422L485 422L471 426ZM477 366L480 373L477 386ZM490 374L489 392L477 386ZM480 373L490 374L477 386ZM487 297L473 299L485 282ZM476 273L485 282L468 285ZM476 273L463 273L471 268ZM463 273L476 273L468 285ZM498 242L495 245L478 242ZM493 255L472 254L478 242ZM495 245L493 255L478 242ZM487 297L497 301L489 309ZM520 309L532 322L519 319ZM520 309L516 301L526 302ZM516 301L520 309L512 310ZM494 352L503 349L502 365ZM503 349L494 352L504 342ZM509 343L503 349L504 342ZM509 343L519 331L526 351ZM515 364L509 343L526 351ZM528 368L515 364L526 351ZM481 312L473 317L465 308ZM564 402L557 398L553 386ZM490 402L508 394L497 411ZM508 394L515 387L516 395ZM490 374L503 391L489 392ZM490 402L503 391L508 394ZM503 391L515 387L508 394ZM477 366L485 360L480 373ZM485 360L490 374L480 373ZM494 352L485 360L477 352ZM497 282L487 297L485 282ZM476 273L491 276L485 282ZM491 276L497 282L485 282ZM497 282L491 276L497 273ZM540 299L530 292L542 290ZM528 252L518 249L524 245ZM518 249L528 252L519 259ZM493 255L478 263L472 254ZM491 276L478 263L493 265ZM478 263L491 276L476 273ZM493 255L507 269L493 265ZM497 282L513 278L504 291ZM524 278L513 278L519 259ZM513 278L507 269L519 259ZM507 269L513 278L497 273ZM497 301L501 316L489 309ZM501 316L497 301L512 310ZM501 316L512 310L519 319ZM513 330L509 343L504 342ZM513 330L519 331L509 343ZM513 330L501 316L519 319ZM473 317L477 329L471 327ZM477 329L483 338L475 346ZM529 379L545 390L530 390ZM515 387L529 379L530 390ZM490 402L483 397L489 392ZM483 397L490 402L475 406ZM489 392L483 397L477 386ZM483 397L475 406L477 386ZM492 413L490 402L497 411ZM503 414L492 413L497 411ZM492 413L503 414L485 422ZM503 376L515 364L521 374ZM498 242L497 251L495 245ZM497 251L507 269L493 255ZM497 251L498 242L518 242ZM518 249L497 251L518 242ZM497 251L518 249L519 259ZM507 269L497 251L519 259ZM513 278L522 284L504 291ZM522 284L513 278L524 278ZM501 316L486 318L489 309ZM486 318L501 316L490 331ZM486 318L481 312L489 309ZM477 329L486 318L490 331ZM486 318L477 329L473 317ZM532 343L537 329L542 347ZM545 390L543 406L532 403ZM551 400L543 406L545 390ZM532 403L543 406L540 413ZM543 406L560 412L540 413ZM545 390L542 374L553 386ZM542 374L549 366L553 386ZM542 374L544 363L549 366ZM544 363L534 353L542 347ZM534 353L532 343L542 347ZM532 343L534 353L526 351ZM534 353L544 363L528 368ZM494 352L483 338L504 342ZM472 254L463 253L478 242ZM471 268L463 273L457 269ZM532 403L521 412L516 395ZM508 394L503 414L497 411ZM473 422L475 406L485 422ZM475 406L473 422L471 426ZM477 352L477 366L475 346ZM528 252L524 245L534 251ZM542 290L524 278L541 270ZM497 301L487 297L504 291ZM497 301L516 301L512 310ZM540 299L529 306L526 302ZM540 299L542 290L540 309ZM529 306L540 299L540 309ZM512 310L520 309L519 319ZM532 322L520 309L529 306ZM529 306L520 309L526 302ZM532 322L519 331L519 319ZM503 349L515 364L502 365ZM515 364L528 368L521 374ZM473 299L481 312L465 308ZM481 312L487 297L489 309ZM530 390L545 390L532 403ZM557 398L564 402L560 412ZM485 360L477 366L477 352ZM528 252L536 260L519 259ZM541 270L536 260L534 251ZM536 260L528 252L534 251ZM487 297L497 282L504 291ZM497 273L491 276L493 265ZM530 292L524 278L542 290ZM516 301L530 292L526 302ZM524 245L518 249L518 242ZM478 263L493 255L493 265ZM472 254L478 263L471 268ZM478 263L476 273L471 268ZM531 334L532 322L537 329ZM490 331L513 330L504 342ZM501 316L513 330L490 331ZM519 331L513 330L519 319ZM477 329L490 331L483 338ZM557 398L551 400L553 386ZM551 400L545 390L553 386ZM528 368L529 379L521 374ZM529 379L515 387L521 374ZM475 406L492 413L485 422ZM490 402L492 413L475 406ZM503 391L503 376L515 387ZM515 387L503 376L521 374ZM503 376L490 374L502 365ZM522 284L530 292L516 301ZM522 284L516 301L504 291ZM481 312L486 318L473 317ZM532 343L531 334L537 329ZM549 366L544 363L542 347ZM543 406L551 400L560 412ZM542 374L529 379L528 368ZM544 363L542 374L528 368ZM534 353L528 368L526 351Z"/><path fill="#585210" d="M414 389L419 399L414 397ZM423 390L419 370L430 385ZM414 389L423 390L419 399ZM444 275L444 283L439 293ZM432 348L443 348L437 355ZM450 328L450 314L456 311Z"/><path fill="#303030" d="M423 390L414 389L419 370ZM419 399L423 390L430 385ZM446 320L450 328L450 329ZM450 328L456 311L450 329ZM456 266L444 275L453 257ZM444 275L456 266L459 273ZM433 312L434 320L428 331ZM434 320L445 337L428 331ZM445 337L434 320L450 329ZM442 303L433 312L439 293ZM442 303L458 304L456 311ZM432 348L424 350L428 331ZM445 337L432 348L428 331ZM419 370L430 372L430 385ZM430 372L437 367L430 385ZM427 357L432 348L437 355ZM432 348L427 357L424 350ZM443 348L437 367L437 355ZM443 348L432 348L445 337ZM443 348L445 337L450 329ZM459 278L444 283L444 275ZM452 292L442 303L439 293ZM452 292L459 278L462 293ZM459 278L452 292L444 283ZM458 304L452 292L462 293ZM442 303L452 292L458 304ZM450 314L450 328L446 320ZM430 372L433 365L437 367ZM437 367L433 365L437 355ZM433 365L427 357L437 355ZM450 314L443 315L442 303ZM443 315L450 314L446 320ZM434 320L443 315L446 320ZM423 364L430 372L419 370ZM433 365L423 364L427 357ZM424 350L423 364L419 370ZM427 357L423 364L424 350Z"/><path fill="#5a2a0a" d="M459 273L456 266L453 257ZM434 320L446 320L450 329ZM459 278L459 273L462 293ZM459 278L444 275L459 273ZM444 283L452 292L439 293ZM450 314L442 303L456 311ZM442 303L443 315L433 312ZM443 315L434 320L433 312ZM423 364L433 365L430 372Z"/><path fill="none" stroke="#ffffff" stroke-width="1" d="M414 389L419 399L414 397ZM423 390L419 370L430 385ZM414 389L423 390L419 399ZM444 275L444 283L439 293ZM432 348L443 348L437 355ZM450 328L450 314L456 311ZM423 390L414 389L419 370ZM419 399L423 390L430 385ZM446 320L450 328L450 329ZM450 328L456 311L450 329ZM456 266L444 275L453 257ZM444 275L456 266L459 273ZM433 312L434 320L428 331ZM434 320L445 337L428 331ZM445 337L434 320L450 329ZM442 303L433 312L439 293ZM442 303L458 304L456 311ZM432 348L424 350L428 331ZM445 337L432 348L428 331ZM419 370L430 372L430 385ZM430 372L437 367L430 385ZM427 357L432 348L437 355ZM432 348L427 357L424 350ZM443 348L437 367L437 355ZM443 348L432 348L445 337ZM443 348L445 337L450 329ZM459 278L444 283L444 275ZM452 292L442 303L439 293ZM452 292L459 278L462 293ZM459 278L452 292L444 283ZM458 304L452 292L462 293ZM442 303L452 292L458 304ZM450 314L450 328L446 320ZM430 372L433 365L437 367ZM437 367L433 365L437 355ZM433 365L427 357L437 355ZM450 314L443 315L442 303ZM443 315L450 314L446 320ZM434 320L443 315L446 320ZM423 364L430 372L419 370ZM433 365L423 364L427 357ZM424 350L423 364L419 370ZM427 357L423 364L424 350ZM459 273L456 266L453 257ZM434 320L446 320L450 329ZM459 278L459 273L462 293ZM459 278L444 275L459 273ZM444 283L452 292L439 293ZM450 314L442 303L456 311ZM442 303L443 315L433 312ZM443 315L434 320L433 312ZM423 364L433 365L430 372Z"/><path fill="#303030" d="M500 416L508 411L512 424ZM484 512L491 505L489 526ZM494 485L491 505L485 488ZM467 600L466 606L450 597ZM477 521L484 512L489 526ZM484 547L483 542L489 526ZM483 542L477 521L489 526ZM477 521L483 542L469 534ZM478 567L481 549L484 547ZM481 549L483 542L484 547ZM454 576L451 596L450 597ZM451 596L467 600L450 597ZM459 544L459 535L469 534ZM481 549L459 544L469 534ZM486 429L480 432L489 420ZM479 477L485 480L485 488ZM477 521L466 509L484 512ZM466 509L466 521L461 514ZM466 521L466 509L477 521ZM467 560L481 549L478 567ZM459 544L467 560L457 556ZM467 560L459 544L481 549ZM472 572L478 567L473 587ZM472 572L467 560L478 567ZM467 583L472 572L473 587ZM467 600L467 583L473 587ZM451 596L467 583L467 600ZM472 572L459 569L467 560ZM467 560L459 569L457 556ZM459 569L467 583L454 576ZM467 583L459 569L472 572ZM468 492L479 477L485 488ZM474 499L468 492L485 488ZM491 505L474 499L485 488ZM468 492L464 493L468 475ZM474 499L467 498L468 492ZM467 498L464 493L468 492ZM467 498L474 499L466 509ZM467 498L466 509L461 514ZM464 493L467 498L461 514Z"/><path fill="#585210" d="M500 416L489 420L508 411ZM467 600L473 587L466 606ZM489 420L480 432L470 430ZM494 485L485 480L494 466ZM472 471L465 472L472 453ZM490 456L507 444L500 464ZM490 456L506 444L507 444ZM481 463L472 471L472 453ZM481 463L479 477L472 471ZM479 477L481 463L494 466ZM467 451L482 445L472 453ZM479 477L468 475L472 471ZM501 437L489 420L500 416ZM501 437L500 416L512 424ZM466 509L474 499L484 512ZM468 475L464 493L465 472Z"/><path fill="#5a2a0a" d="M500 464L494 485L494 466ZM507 444L506 444L512 424ZM485 480L494 485L485 488ZM465 472L467 451L472 453ZM483 542L481 549L469 534ZM466 521L459 535L461 514ZM459 535L466 521L469 534ZM466 521L477 521L469 534ZM490 456L500 464L494 466ZM481 463L490 456L494 466ZM490 456L481 463L472 453ZM485 480L479 477L494 466ZM482 445L490 456L472 453ZM486 429L482 445L480 432ZM482 445L467 451L470 430ZM480 432L482 445L470 430ZM468 475L465 472L472 471ZM467 583L451 596L454 576ZM459 569L454 576L457 556ZM498 440L482 445L486 429ZM490 456L498 440L506 444ZM482 445L498 440L490 456ZM468 492L468 475L479 477ZM501 437L498 440L486 429ZM501 437L486 429L489 420ZM506 444L501 437L512 424ZM498 440L501 437L506 444ZM474 499L491 505L484 512Z"/><path fill="none" stroke="#ffffff" stroke-width="1" d="M500 416L508 411L512 424ZM484 512L491 505L489 526ZM494 485L491 505L485 488ZM467 600L466 606L450 597ZM477 521L484 512L489 526ZM484 547L483 542L489 526ZM483 542L477 521L489 526ZM477 521L483 542L469 534ZM478 567L481 549L484 547ZM481 549L483 542L484 547ZM454 576L451 596L450 597ZM451 596L467 600L450 597ZM459 544L459 535L469 534ZM481 549L459 544L469 534ZM486 429L480 432L489 420ZM479 477L485 480L485 488ZM477 521L466 509L484 512ZM466 509L466 521L461 514ZM466 521L466 509L477 521ZM467 560L481 549L478 567ZM459 544L467 560L457 556ZM467 560L459 544L481 549ZM472 572L478 567L473 587ZM472 572L467 560L478 567ZM467 583L472 572L473 587ZM467 600L467 583L473 587ZM451 596L467 583L467 600ZM472 572L459 569L467 560ZM467 560L459 569L457 556ZM459 569L467 583L454 576ZM467 583L459 569L472 572ZM468 492L479 477L485 488ZM474 499L468 492L485 488ZM491 505L474 499L485 488ZM468 492L464 493L468 475ZM474 499L467 498L468 492ZM467 498L464 493L468 492ZM467 498L474 499L466 509ZM467 498L466 509L461 514ZM464 493L467 498L461 514ZM500 416L489 420L508 411ZM467 600L473 587L466 606ZM489 420L480 432L470 430ZM494 485L485 480L494 466ZM472 471L465 472L472 453ZM490 456L507 444L500 464ZM490 456L506 444L507 444ZM481 463L472 471L472 453ZM481 463L479 477L472 471ZM479 477L481 463L494 466ZM467 451L482 445L472 453ZM479 477L468 475L472 471ZM501 437L489 420L500 416ZM501 437L500 416L512 424ZM466 509L474 499L484 512ZM468 475L464 493L465 472ZM500 464L494 485L494 466ZM507 444L506 444L512 424ZM485 480L494 485L485 488ZM465 472L467 451L472 453ZM483 542L481 549L469 534ZM466 521L459 535L461 514ZM459 535L466 521L469 534ZM466 521L477 521L469 534ZM490 456L500 464L494 466ZM481 463L490 456L494 466ZM490 456L481 463L472 453ZM485 480L479 477L494 466ZM482 445L490 456L472 453ZM486 429L482 445L480 432ZM482 445L467 451L470 430ZM480 432L482 445L470 430ZM468 475L465 472L472 471ZM467 583L451 596L454 576ZM459 569L454 576L457 556ZM498 440L482 445L486 429ZM490 456L498 440L506 444ZM482 445L498 440L490 456ZM468 492L468 475L479 477ZM501 437L498 440L486 429ZM501 437L486 429L489 420ZM506 444L501 437L512 424ZM498 440L501 437L506 444ZM474 499L491 505L484 512Z"/><path fill="#585210" d="M532 421L532 426L528 414ZM532 421L544 423L532 426ZM547 412L532 421L528 414ZM575 464L588 462L592 474ZM552 446L559 453L544 441ZM629 516L627 508L637 504ZM651 521L651 513L654 529ZM618 466L602 462L603 453ZM607 478L618 466L628 482ZM607 478L607 485L592 474ZM545 440L552 446L544 441ZM544 423L545 440L532 426ZM601 471L602 462L618 466ZM588 462L601 471L592 474ZM558 424L564 431L549 437ZM571 454L582 456L575 464ZM582 456L571 454L577 445ZM589 441L582 456L577 445ZM571 454L563 444L577 445ZM563 444L571 454L560 451ZM563 444L552 446L549 437ZM566 418L564 431L558 424ZM589 441L596 452L582 456ZM596 452L602 462L588 462ZM564 431L578 428L577 445Z"/><path fill="#5a2a0a" d="M645 546L641 528L654 529ZM638 543L627 535L630 528ZM641 528L638 543L630 528ZM638 543L641 528L645 546ZM638 543L645 546L630 549ZM627 535L638 543L630 549ZM638 498L628 489L628 482ZM627 508L638 498L637 504ZM628 489L613 490L628 482ZM613 490L628 489L620 500ZM641 528L651 521L654 529ZM651 513L652 511L654 529ZM652 511L651 513L637 504ZM638 498L652 511L637 504ZM613 490L607 478L628 482ZM607 478L613 490L607 485ZM552 446L545 440L549 437ZM532 426L545 440L544 441ZM629 516L639 522L630 528ZM639 522L629 516L637 504ZM552 446L560 451L559 453ZM582 456L588 462L575 464ZM547 412L558 424L544 423ZM565 415L547 412L566 411ZM565 415L558 424L547 412ZM607 478L601 471L618 466ZM601 471L607 478L592 474ZM602 462L601 471L588 462ZM559 453L571 454L575 464ZM560 451L571 454L559 453ZM564 431L563 444L549 437ZM566 418L565 415L566 411ZM582 456L596 452L588 462ZM596 452L589 441L603 453ZM578 428L589 441L577 445ZM566 418L577 425L564 431Z"/><path fill="#303030" d="M547 412L544 423L532 421ZM628 489L638 498L620 500ZM638 498L627 508L620 500ZM549 437L545 440L544 423ZM639 522L651 521L641 528ZM639 522L641 528L630 528ZM651 521L639 522L651 513ZM651 513L639 522L637 504ZM558 424L549 437L544 423ZM563 444L564 431L577 445ZM563 444L560 451L552 446ZM565 415L566 418L558 424ZM602 462L596 452L603 453ZM577 425L578 428L564 431ZM577 425L566 418L566 411ZM578 428L577 425L589 441Z"/><path fill="none" stroke="#ffffff" stroke-width="1" d="M532 421L532 426L528 414ZM532 421L544 423L532 426ZM547 412L532 421L528 414ZM575 464L588 462L592 474ZM552 446L559 453L544 441ZM629 516L627 508L637 504ZM651 521L651 513L654 529ZM618 466L602 462L603 453ZM607 478L618 466L628 482ZM607 478L607 485L592 474ZM545 440L552 446L544 441ZM544 423L545 440L532 426ZM601 471L602 462L618 466ZM588 462L601 471L592 474ZM558 424L564 431L549 437ZM571 454L582 456L575 464ZM582 456L571 454L577 445ZM589 441L582 456L577 445ZM571 454L563 444L577 445ZM563 444L571 454L560 451ZM563 444L552 446L549 437ZM566 418L564 431L558 424ZM589 441L596 452L582 456ZM596 452L602 462L588 462ZM564 431L578 428L577 445ZM645 546L641 528L654 529ZM638 543L627 535L630 528ZM641 528L638 543L630 528ZM638 543L641 528L645 546ZM638 543L645 546L630 549ZM627 535L638 543L630 549ZM638 498L628 489L628 482ZM627 508L638 498L637 504ZM628 489L613 490L628 482ZM613 490L628 489L620 500ZM641 528L651 521L654 529ZM651 513L652 511L654 529ZM652 511L651 513L637 504ZM638 498L652 511L637 504ZM613 490L607 478L628 482ZM607 478L613 490L607 485ZM552 446L545 440L549 437ZM532 426L545 440L544 441ZM629 516L639 522L630 528ZM639 522L629 516L637 504ZM552 446L560 451L559 453ZM582 456L588 462L575 464ZM547 412L558 424L544 423ZM565 415L547 412L566 411ZM565 415L558 424L547 412ZM607 478L601 471L618 466ZM601 471L607 478L592 474ZM602 462L601 471L588 462ZM559 453L571 454L575 464ZM560 451L571 454L559 453ZM564 431L563 444L549 437ZM566 418L565 415L566 411ZM582 456L596 452L588 462ZM596 452L589 441L603 453ZM578 428L589 441L577 445ZM566 418L577 425L564 431ZM547 412L544 423L532 421ZM628 489L638 498L620 500ZM638 498L627 508L620 500ZM549 437L545 440L544 423ZM639 522L651 521L641 528ZM639 522L641 528L630 528ZM651 521L639 522L651 513ZM651 513L639 522L637 504ZM558 424L549 437L544 423ZM563 444L564 431L577 445ZM563 444L560 451L552 446ZM565 415L566 418L558 424ZM602 462L596 452L603 453ZM577 425L578 428L564 431ZM577 425L566 418L566 411ZM578 428L577 425L589 441Z"/><path fill="#5a2a0a" d="M466 248L463 246L467 245ZM412 614L410 615L411 615ZM463 246L466 243L467 245ZM402 420L401 425L399 422ZM401 425L401 427L399 422ZM638 555L634 554L635 551ZM624 565L625 566L620 565ZM621 562L619 564L617 561ZM626 561L630 564L625 566ZM624 565L626 561L625 566ZM407 404L410 405L409 409ZM406 402L407 404L403 407ZM410 402L414 401L410 405ZM445 223L444 222L449 223ZM404 429L407 429L405 432ZM413 433L411 434L410 429ZM403 432L404 429L405 432ZM449 603L445 603L447 601ZM644 546L639 546L641 544ZM440 605L437 606L442 603ZM439 613L435 610L439 610ZM443 610L439 613L439 610ZM413 619L414 621L416 624ZM414 616L412 617L412 614ZM449 624L451 624L455 624ZM621 558L623 552L625 556ZM621 558L621 562L617 561ZM622 563L624 565L620 565ZM414 401L416 405L410 405ZM419 402L416 405L416 402ZM416 411L412 415L412 412ZM419 398L417 399L414 397ZM445 223L444 227L442 226ZM450 228L450 231L447 230ZM463 242L465 242L463 246ZM461 248L459 247L463 246ZM461 248L465 250L464 252ZM426 243L428 241L431 245ZM428 241L426 243L427 241ZM417 422L417 421L418 417ZM403 432L402 428L404 429ZM402 428L401 427L402 427ZM434 610L437 607L435 610ZM437 607L434 610L432 608ZM451 611L447 611L449 608ZM459 612L456 607L459 606ZM445 605L449 603L449 608ZM451 600L449 603L449 600ZM451 604L451 600L453 601ZM462 604L458 603L463 604ZM462 604L459 606L458 603ZM641 544L637 544L635 545ZM639 546L637 544L641 544ZM639 549L637 544L639 546ZM638 552L639 549L641 554ZM630 564L632 562L635 563ZM632 557L632 562L629 558ZM447 611L444 615L443 610ZM416 613L420 616L414 616ZM424 614L425 617L423 617ZM427 620L425 617L429 616ZM430 611L426 611L427 609ZM624 561L622 563L621 562ZM624 561L626 561L624 565ZM626 549L624 549L625 547ZM624 549L625 551L623 552ZM630 548L626 549L630 546ZM420 412L418 412L420 409ZM418 412L416 411L420 409ZM416 411L418 412L412 415ZM459 239L463 242L457 242ZM459 239L455 240L459 238ZM461 233L462 233L464 238ZM441 245L443 242L444 246ZM449 252L449 248L452 253ZM424 228L424 230L421 230ZM424 230L424 228L429 228ZM415 231L418 229L417 235ZM416 227L415 230L415 226ZM416 227L418 229L415 230ZM423 239L425 237L427 241ZM401 425L404 423L402 427ZM407 427L404 423L408 425ZM407 427L404 429L402 427ZM447 611L450 614L448 617ZM451 611L450 614L447 611ZM457 602L453 604L453 601ZM456 607L453 604L457 605ZM453 608L453 604L456 607ZM453 604L453 608L451 604ZM630 556L633 551L634 554ZM632 562L634 560L635 563ZM433 624L437 623L438 624ZM437 623L433 624L434 620ZM425 623L428 622L427 624ZM434 610L435 614L430 611ZM420 615L416 613L421 611ZM425 617L427 614L429 616ZM446 622L444 624L444 621ZM421 406L418 406L419 402ZM401 412L403 413L400 415ZM404 411L401 412L400 411ZM450 235L446 232L450 231ZM453 240L453 234L456 236ZM455 249L450 247L454 246ZM463 242L463 240L465 242ZM446 242L443 242L446 241ZM446 242L450 240L450 243ZM455 257L450 255L452 253ZM419 234L418 236L417 235ZM418 236L419 234L423 235ZM419 234L418 229L421 230ZM418 229L419 234L417 235ZM410 428L408 425L412 422ZM453 619L449 618L453 618ZM454 611L453 608L456 607ZM460 622L461 619L463 617ZM461 615L459 616L459 612ZM444 607L445 605L449 608ZM444 607L447 611L443 610ZM644 549L644 546L647 544ZM642 549L644 549L641 554ZM442 614L443 616L440 617ZM443 616L441 619L440 617ZM441 619L443 616L444 621ZM443 624L444 624L438 624ZM444 624L443 624L444 621ZM443 624L441 622L444 621ZM438 621L437 617L440 617ZM438 621L437 623L434 620ZM437 617L438 621L434 620ZM430 614L434 616L429 616ZM403 413L400 416L400 415ZM445 249L445 251L440 250ZM428 231L424 230L429 228ZM428 231L428 235L424 230ZM439 237L443 235L441 240ZM439 237L439 232L443 235ZM450 240L447 237L450 236ZM447 237L450 240L446 241ZM436 240L439 242L437 244ZM443 242L439 242L441 240ZM439 242L443 242L441 245ZM439 246L439 242L441 245ZM439 242L439 246L437 244ZM433 243L435 245L431 245ZM404 423L406 421L408 425ZM406 421L403 417L409 417ZM454 611L452 613L451 611ZM450 614L452 613L453 618ZM459 616L456 613L459 612ZM456 613L452 613L454 611ZM461 617L461 619L459 616ZM461 615L462 611L465 612ZM462 611L461 615L459 612ZM465 612L462 611L465 611ZM460 255L458 255L460 252ZM443 235L445 236L441 240ZM437 240L439 237L441 240ZM431 232L429 237L428 235ZM429 237L431 232L434 236ZM425 237L429 237L427 241ZM432 231L431 228L435 227ZM431 240L433 243L431 245ZM431 232L434 234L434 236ZM434 234L432 231L437 232Z"/><path fill="#404040" d="M638 558L638 555L641 554ZM635 559L638 555L638 558ZM635 545L633 548L630 546ZM465 250L466 248L464 252ZM465 250L463 246L466 248ZM465 242L466 243L463 246ZM449 603L447 601L449 600ZM412 614L412 617L410 615ZM416 619L419 620L416 624ZM619 564L621 562L620 565ZM410 402L406 402L409 397ZM410 402L407 404L406 402ZM404 411L406 407L409 409ZM412 412L408 412L409 409ZM444 222L445 223L442 226ZM457 245L454 244L457 242ZM429 223L424 223L429 221ZM429 223L425 224L424 223ZM425 224L429 223L429 228ZM445 603L442 603L447 601ZM467 607L467 606L463 604ZM465 611L467 606L467 607ZM413 619L416 619L414 621ZM413 619L414 616L416 619ZM416 619L420 616L419 620ZM414 616L420 616L416 619ZM420 616L424 614L423 617ZM413 418L417 416L418 417ZM412 398L410 402L409 397ZM410 402L412 398L414 401ZM416 405L414 401L416 402ZM415 400L412 398L414 397ZM415 400L417 399L416 402ZM412 415L409 415L412 412ZM454 226L450 228L449 223ZM450 228L454 226L453 228ZM444 231L444 227L447 230ZM463 242L457 245L457 242ZM449 248L455 249L452 253ZM423 235L423 239L421 240ZM418 229L420 226L421 230ZM424 230L428 235L424 235ZM417 421L413 418L418 417ZM404 429L402 428L402 427ZM434 610L430 611L432 608ZM437 607L440 605L439 610ZM437 606L437 607L432 608ZM457 602L458 603L457 605ZM449 603L451 604L449 608ZM464 606L462 604L463 604ZM637 544L639 549L635 545ZM632 557L634 554L635 559ZM626 557L627 554L629 558ZM431 621L434 620L432 622ZM431 621L434 616L434 620ZM416 613L412 614L411 615ZM427 609L426 611L421 611ZM425 623L427 624L421 624ZM423 617L424 619L419 620ZM424 619L423 623L419 620ZM425 623L424 619L427 620ZM449 621L444 621L448 617ZM624 561L626 557L626 561ZM622 551L624 549L623 552ZM625 551L626 549L629 551ZM627 554L625 551L629 551ZM626 549L630 548L629 551ZM413 409L416 405L416 409ZM418 406L416 405L419 402ZM416 409L418 406L420 409ZM416 405L418 406L416 409ZM417 416L418 412L420 412ZM446 225L445 223L449 223ZM454 231L450 231L453 228ZM455 240L459 239L457 242ZM462 233L461 233L458 230ZM435 248L439 246L440 250ZM449 248L445 249L444 246ZM445 249L440 250L444 246ZM458 250L455 249L457 245ZM461 248L458 250L459 247ZM460 252L458 250L461 248ZM420 226L424 228L421 230ZM424 228L425 224L429 228ZM426 243L425 242L427 241ZM423 239L425 242L421 240ZM435 245L435 248L431 245ZM435 245L439 246L435 248ZM404 423L401 425L402 420ZM407 427L407 429L404 429ZM443 607L443 610L439 610ZM440 605L443 607L439 610ZM453 604L451 604L453 601ZM453 604L457 602L457 605ZM639 549L642 549L641 554ZM627 554L630 556L629 558ZM630 556L627 554L629 551ZM442 614L439 613L443 610ZM428 622L431 621L432 622ZM444 624L446 622L449 624ZM421 406L419 402L422 401ZM403 413L401 412L404 411ZM456 234L454 231L458 230ZM456 234L461 233L459 238ZM450 243L450 240L453 240ZM459 239L463 240L463 242ZM463 240L464 238L465 242ZM446 242L450 247L444 246ZM448 250L449 252L445 252ZM429 223L431 228L429 228ZM433 225L431 228L429 223ZM433 224L429 223L429 221ZM433 224L433 225L429 223ZM446 232L443 235L444 231ZM415 426L414 427L414 423ZM408 425L410 420L412 422ZM412 422L410 420L413 419ZM410 428L407 427L408 425ZM410 428L414 427L410 429ZM407 427L410 428L407 429ZM449 618L450 614L453 618ZM449 618L453 619L449 621ZM444 607L443 607L445 605ZM447 611L444 607L449 608ZM444 621L443 616L448 617ZM437 623L438 621L438 624ZM441 619L438 621L440 617ZM435 614L430 614L430 611ZM430 614L435 614L434 616ZM400 415L400 416L399 417ZM408 412L405 415L404 411ZM449 252L450 255L445 252ZM450 255L450 255L455 257ZM448 250L445 251L445 249ZM457 251L458 250L460 252ZM431 228L428 231L429 228ZM447 237L446 232L450 235ZM461 617L461 615L463 617ZM458 255L460 255L455 257ZM458 255L457 251L460 252ZM444 227L441 231L442 226ZM438 232L439 232L437 232ZM438 228L438 232L435 227ZM445 236L443 235L446 232ZM445 236L447 237L446 241ZM437 240L439 242L436 240ZM437 240L437 236L439 237ZM438 232L432 231L435 227ZM432 231L438 232L437 232ZM429 237L431 240L428 241ZM431 240L434 236L436 240ZM432 231L434 234L431 232ZM434 234L437 236L434 236Z"/><path fill="#303030" d="M635 559L638 558L635 563ZM617 561L619 564L620 565ZM400 420L402 420L399 422ZM400 420L399 417L402 420ZM403 407L404 411L400 411ZM401 427L401 425L402 427ZM638 552L638 555L635 551ZM419 624L421 624L416 624ZM419 620L419 624L416 624ZM419 624L419 620L421 624ZM414 621L416 619L416 624ZM644 546L646 542L647 544ZM417 399L419 402L416 402ZM407 404L410 402L410 405ZM411 434L407 429L410 429ZM407 429L411 434L405 432ZM459 606L456 607L457 605ZM465 612L465 611L467 607ZM467 606L464 606L463 604ZM464 606L467 606L465 611ZM430 611L427 609L432 608ZM412 617L413 619L410 615ZM457 620L460 622L455 624ZM621 562L622 563L620 565ZM626 549L625 547L630 546ZM633 551L633 548L635 551ZM417 416L420 412L418 417ZM413 418L413 419L410 417ZM412 415L413 418L410 417ZM414 397L412 398L409 397ZM417 399L415 400L414 397ZM414 401L415 400L416 402ZM444 227L450 228L447 230ZM450 231L450 228L453 228ZM455 240L453 240L456 236ZM455 240L454 244L453 240ZM461 233L464 238L459 238ZM420 226L420 226L415 226ZM413 419L417 421L414 423ZM417 421L417 422L414 423ZM413 418L417 421L413 419ZM409 417L409 415L410 417ZM405 432L410 436L405 438ZM410 436L411 434L413 433ZM402 428L403 432L401 427ZM445 605L445 603L449 603ZM639 549L633 548L635 545ZM639 549L638 552L635 551ZM626 557L621 558L625 556ZM627 554L626 557L625 556ZM626 561L632 562L630 564ZM629 558L632 562L626 561ZM434 620L433 624L432 622ZM444 615L447 611L448 617ZM431 621L427 620L429 616ZM416 613L414 616L412 614ZM426 611L424 614L421 611ZM423 623L425 623L421 624ZM425 617L424 619L423 617ZM451 624L455 622L455 624ZM619 556L622 551L623 552ZM621 558L619 556L623 552ZM619 556L621 558L617 561ZM621 558L624 561L621 562ZM622 563L624 561L624 565ZM626 557L624 561L621 558ZM625 551L624 549L626 549ZM633 551L630 548L633 548ZM633 548L630 548L630 546ZM416 405L413 409L410 405ZM416 411L413 409L416 409ZM450 228L446 225L449 223ZM446 225L450 228L444 227ZM450 243L454 244L454 246ZM439 246L441 245L440 250ZM460 255L460 252L464 252ZM459 247L458 250L457 245ZM425 224L424 228L420 226ZM425 242L426 243L421 240ZM439 246L435 245L437 244ZM418 236L423 235L421 240ZM418 229L415 231L415 230ZM418 236L415 231L417 235ZM420 226L416 227L415 226ZM425 237L423 235L424 235ZM423 235L425 237L423 239ZM404 423L407 427L402 427ZM453 608L451 611L449 608ZM443 607L440 605L442 603ZM445 605L443 607L442 603ZM642 549L639 546L644 546ZM642 549L639 549L639 546ZM632 557L630 556L634 554ZM634 560L635 559L635 563ZM439 613L442 614L440 617ZM439 613L435 614L435 610ZM435 614L437 617L434 616ZM437 617L439 613L440 617ZM427 614L425 617L424 614ZM449 621L453 619L451 624ZM421 406L420 412L420 409ZM446 232L444 231L447 230ZM461 233L456 234L458 230ZM450 235L453 234L450 236ZM453 234L456 234L456 236ZM456 234L453 234L454 231ZM450 247L455 249L449 248ZM450 247L449 248L444 246ZM463 240L459 239L459 238ZM443 242L446 242L444 246ZM450 240L446 242L446 241ZM450 255L449 252L452 253ZM456 255L455 257L452 253ZM431 228L433 225L435 227ZM414 427L415 426L415 427ZM414 427L412 422L414 423ZM450 614L449 618L448 617ZM449 618L449 621L448 617ZM459 612L454 611L456 607ZM457 620L461 619L460 622ZM459 616L461 619L457 620ZM461 615L465 612L463 617ZM443 616L442 614L444 615ZM443 616L444 615L448 617ZM438 621L441 622L438 624ZM441 622L438 621L441 619ZM400 416L403 417L402 420ZM405 415L403 417L403 413ZM409 417L405 415L409 415ZM450 255L450 255L449 252ZM458 250L457 251L455 249ZM457 251L456 255L452 253ZM433 224L438 227L435 227ZM438 227L438 228L435 227ZM433 243L436 240L437 244ZM406 421L404 423L402 420ZM403 417L406 421L402 420ZM406 421L410 420L408 425ZM410 420L406 421L409 417ZM452 613L450 614L451 611ZM456 613L459 616L453 618ZM461 619L461 617L463 617ZM464 606L462 611L459 606ZM457 251L458 255L456 255ZM456 255L458 255L455 257ZM443 235L441 231L444 231ZM439 232L441 231L443 235ZM439 232L438 232L438 228ZM437 236L439 232L439 237ZM447 237L445 236L446 232ZM445 236L446 241L441 240ZM439 242L437 240L441 240ZM428 231L431 232L428 235ZM429 237L428 241L427 241ZM428 241L431 240L431 245Z"/><path fill="#808080" d="M399 417L400 420L399 422ZM458 603L459 606L457 605ZM638 555L638 552L641 554ZM635 559L634 554L638 555ZM644 546L641 544L646 542ZM406 407L404 411L403 407ZM406 407L407 404L409 409ZM407 404L406 407L403 407ZM408 412L404 411L409 409ZM400 415L399 417L400 411ZM454 244L457 245L454 246ZM425 224L420 226L424 223ZM421 230L424 230L424 235ZM403 432L405 432L405 438ZM414 616L413 619L412 617ZM420 616L423 617L419 620ZM419 620L423 623L421 624ZM623 552L627 554L625 556ZM634 554L633 551L635 551ZM417 416L413 418L412 415ZM416 411L416 409L420 409ZM412 398L415 400L414 401ZM419 402L419 398L422 401ZM417 399L419 398L419 402ZM409 415L412 415L410 417ZM409 415L408 412L412 412ZM453 228L454 226L458 230ZM459 247L463 242L463 246ZM463 242L459 247L457 245ZM459 238L455 240L456 236ZM454 244L455 240L457 242ZM464 238L466 243L465 242ZM440 250L441 245L444 246ZM465 250L461 248L463 246ZM460 252L461 248L464 252ZM457 245L455 249L454 246ZM412 422L413 419L414 423ZM411 434L410 436L405 432ZM435 610L437 607L439 610ZM440 605L437 607L437 606ZM445 603L445 605L442 603ZM457 602L453 601L458 603ZM451 600L451 604L449 603ZM462 604L464 606L459 606ZM633 548L639 549L635 551ZM626 557L629 558L626 561ZM434 616L431 621L429 616ZM424 619L425 623L423 623ZM424 619L425 617L427 620ZM455 622L457 620L455 624ZM449 621L451 624L449 624ZM624 549L622 551L625 547ZM625 551L627 554L623 552ZM630 548L633 551L629 551ZM410 405L413 409L409 409ZM413 409L412 412L409 409ZM413 409L416 411L412 412ZM418 412L417 416L412 415ZM446 225L444 227L445 223ZM454 231L453 228L458 230ZM454 244L450 243L453 240ZM446 241L443 242L441 240ZM424 228L420 226L420 226ZM425 242L423 239L427 241ZM418 229L416 227L420 226ZM428 235L425 237L424 235ZM417 422L415 426L414 423ZM415 427L415 426L417 422ZM451 604L453 608L449 608ZM459 616L457 620L453 618ZM630 556L632 557L629 558ZM633 551L630 556L629 551ZM634 560L632 557L635 559ZM634 560L632 562L632 557ZM444 615L442 614L443 610ZM441 622L441 619L444 621ZM431 621L428 622L427 620ZM428 622L425 623L427 620ZM428 622L433 624L427 624ZM433 624L428 622L432 622ZM435 614L434 610L435 610ZM434 616L437 617L434 620ZM437 617L435 614L439 613ZM416 613L420 615L420 616ZM424 614L420 615L421 611ZM420 615L424 614L420 616ZM427 614L426 611L430 611ZM426 611L427 614L424 614ZM457 620L453 619L453 618ZM455 622L453 619L457 620ZM453 619L455 622L451 624ZM446 622L449 621L449 624ZM449 621L446 622L444 621ZM418 406L421 406L420 409ZM401 412L400 415L400 411ZM450 231L446 232L447 230ZM456 234L459 238L456 236ZM453 234L450 235L450 231ZM454 231L453 234L450 231ZM453 234L453 240L450 236ZM450 247L450 243L454 246ZM453 240L450 240L450 236ZM464 238L463 240L459 238ZM450 247L446 242L450 243ZM449 252L448 250L449 248ZM448 250L445 249L449 248ZM419 234L421 230L424 235ZM423 235L419 234L424 235ZM433 225L433 224L435 227ZM414 427L413 433L410 429ZM414 427L415 427L413 433ZM410 420L409 417L410 417ZM413 419L410 420L410 417ZM407 429L410 428L410 429ZM414 427L410 428L412 422ZM453 608L454 611L451 611ZM443 607L444 607L443 610ZM644 549L642 549L644 546ZM641 554L644 549L647 544ZM441 622L443 624L438 624ZM427 614L430 614L429 616ZM430 614L427 614L430 611ZM403 417L400 416L403 413ZM399 417L400 416L402 420ZM409 415L405 415L408 412ZM403 417L405 415L409 417ZM405 415L403 413L404 411ZM445 251L448 250L445 252ZM445 251L445 252L440 250ZM455 249L457 251L452 253ZM447 237L450 235L450 236ZM435 245L433 243L437 244ZM456 613L454 611L459 612ZM452 613L456 613L453 618ZM461 615L461 617L459 616ZM462 611L464 606L465 611ZM462 611L459 612L459 606ZM444 231L441 231L444 227ZM441 231L439 232L438 228ZM439 232L437 236L437 232ZM434 236L437 236L436 240ZM437 236L437 240L436 240ZM429 237L425 237L428 235ZM432 231L428 231L431 228ZM432 231L431 232L428 231ZM433 243L431 240L436 240ZM431 240L429 237L434 236ZM437 236L434 234L437 232Z"/><path fill="none" stroke="#e0e0e0" stroke-width="1" d="M466 248L463 246L467 245ZM412 614L410 615L411 615ZM463 246L466 243L467 245ZM402 420L401 425L399 422ZM401 425L401 427L399 422ZM638 555L634 554L635 551ZM624 565L625 566L620 565ZM621 562L619 564L617 561ZM626 561L630 564L625 566ZM624 565L626 561L625 566ZM407 404L410 405L409 409ZM406 402L407 404L403 407ZM410 402L414 401L410 405ZM445 223L444 222L449 223ZM404 429L407 429L405 432ZM413 433L411 434L410 429ZM403 432L404 429L405 432ZM449 603L445 603L447 601ZM644 546L639 546L641 544ZM440 605L437 606L442 603ZM439 613L435 610L439 610ZM443 610L439 613L439 610ZM413 619L414 621L416 624ZM414 616L412 617L412 614ZM449 624L451 624L455 624ZM621 558L623 552L625 556ZM621 558L621 562L617 561ZM622 563L624 565L620 565ZM414 401L416 405L410 405ZM419 402L416 405L416 402ZM416 411L412 415L412 412ZM419 398L417 399L414 397ZM445 223L444 227L442 226ZM450 228L450 231L447 230ZM463 242L465 242L463 246ZM461 248L459 247L463 246ZM461 248L465 250L464 252ZM426 243L428 241L431 245ZM428 241L426 243L427 241ZM417 422L417 421L418 417ZM403 432L402 428L404 429ZM402 428L401 427L402 427ZM434 610L437 607L435 610ZM437 607L434 610L432 608ZM451 611L447 611L449 608ZM459 612L456 607L459 606ZM445 605L449 603L449 608ZM451 600L449 603L449 600ZM451 604L451 600L453 601ZM462 604L458 603L463 604ZM462 604L459 606L458 603ZM641 544L637 544L635 545ZM639 546L637 544L641 544ZM639 549L637 544L639 546ZM638 552L639 549L641 554ZM630 564L632 562L635 563ZM632 557L632 562L629 558ZM447 611L444 615L443 610ZM416 613L420 616L414 616ZM424 614L425 617L423 617ZM427 620L425 617L429 616ZM430 611L426 611L427 609ZM624 561L622 563L621 562ZM624 561L626 561L624 565ZM626 549L624 549L625 547ZM624 549L625 551L623 552ZM630 548L626 549L630 546ZM420 412L418 412L420 409ZM418 412L416 411L420 409ZM416 411L418 412L412 415ZM459 239L463 242L457 242ZM459 239L455 240L459 238ZM461 233L462 233L464 238ZM441 245L443 242L444 246ZM449 252L449 248L452 253ZM424 228L424 230L421 230ZM424 230L424 228L429 228ZM415 231L418 229L417 235ZM416 227L415 230L415 226ZM416 227L418 229L415 230ZM423 239L425 237L427 241ZM401 425L404 423L402 427ZM407 427L404 423L408 425ZM407 427L404 429L402 427ZM447 611L450 614L448 617ZM451 611L450 614L447 611ZM457 602L453 604L453 601ZM456 607L453 604L457 605ZM453 608L453 604L456 607ZM453 604L453 608L451 604ZM630 556L633 551L634 554ZM632 562L634 560L635 563ZM433 624L437 623L438 624ZM437 623L433 624L434 620ZM425 623L428 622L427 624ZM434 610L435 614L430 611ZM420 615L416 613L421 611ZM425 617L427 614L429 616ZM446 622L444 624L444 621ZM421 406L418 406L419 402ZM401 412L403 413L400 415ZM404 411L401 412L400 411ZM450 235L446 232L450 231ZM453 240L453 234L456 236ZM455 249L450 247L454 246ZM463 242L463 240L465 242ZM446 242L443 242L446 241ZM446 242L450 240L450 243ZM455 257L450 255L452 253ZM419 234L418 236L417 235ZM418 236L419 234L423 235ZM419 234L418 229L421 230ZM418 229L419 234L417 235ZM410 428L408 425L412 422ZM453 619L449 618L453 618ZM454 611L453 608L456 607ZM460 622L461 619L463 617ZM461 615L459 616L459 612ZM444 607L445 605L449 608ZM444 607L447 611L443 610ZM644 549L644 546L647 544ZM642 549L644 549L641 554ZM442 614L443 616L440 617ZM443 616L441 619L440 617ZM441 619L443 616L444 621ZM443 624L444 624L438 624ZM444 624L443 624L444 621ZM443 624L441 622L444 621ZM438 621L437 617L440 617ZM438 621L437 623L434 620ZM437 617L438 621L434 620ZM430 614L434 616L429 616ZM403 413L400 416L400 415ZM445 249L445 251L440 250ZM428 231L424 230L429 228ZM428 231L428 235L424 230ZM439 237L443 235L441 240ZM439 237L439 232L443 235ZM450 240L447 237L450 236ZM447 237L450 240L446 241ZM436 240L439 242L437 244ZM443 242L439 242L441 240ZM439 242L443 242L441 245ZM439 246L439 242L441 245ZM439 242L439 246L437 244ZM433 243L435 245L431 245ZM404 423L406 421L408 425ZM406 421L403 417L409 417ZM454 611L452 613L451 611ZM450 614L452 613L453 618ZM459 616L456 613L459 612ZM456 613L452 613L454 611ZM461 617L461 619L459 616ZM461 615L462 611L465 612ZM462 611L461 615L459 612ZM465 612L462 611L465 611ZM460 255L458 255L460 252ZM443 235L445 236L441 240ZM437 240L439 237L441 240ZM431 232L429 237L428 235ZM429 237L431 232L434 236ZM425 237L429 237L427 241ZM432 231L431 228L435 227ZM431 240L433 243L431 245ZM431 232L434 234L434 236ZM434 234L432 231L437 232ZM638 558L638 555L641 554ZM635 559L638 555L638 558ZM635 545L633 548L630 546ZM465 250L466 248L464 252ZM465 250L463 246L466 248ZM465 242L466 243L463 246ZM449 603L447 601L449 600ZM412 614L412 617L410 615ZM416 619L419 620L416 624ZM619 564L621 562L620 565ZM410 402L406 402L409 397ZM410 402L407 404L406 402ZM404 411L406 407L409 409ZM412 412L408 412L409 409ZM444 222L445 223L442 226ZM457 245L454 244L457 242ZM429 223L424 223L429 221ZM429 223L425 224L424 223ZM425 224L429 223L429 228ZM445 603L442 603L447 601ZM467 607L467 606L463 604ZM465 611L467 606L467 607ZM413 619L416 619L414 621ZM413 619L414 616L416 619ZM416 619L420 616L419 620ZM414 616L420 616L416 619ZM420 616L424 614L423 617ZM413 418L417 416L418 417ZM412 398L410 402L409 397ZM410 402L412 398L414 401ZM416 405L414 401L416 402ZM415 400L412 398L414 397ZM415 400L417 399L416 402ZM412 415L409 415L412 412ZM454 226L450 228L449 223ZM450 228L454 226L453 228ZM444 231L444 227L447 230ZM463 242L457 245L457 242ZM449 248L455 249L452 253ZM423 235L423 239L421 240ZM418 229L420 226L421 230ZM424 230L428 235L424 235ZM417 421L413 418L418 417ZM404 429L402 428L402 427ZM434 610L430 611L432 608ZM437 607L440 605L439 610ZM437 606L437 607L432 608ZM457 602L458 603L457 605ZM449 603L451 604L449 608ZM464 606L462 604L463 604ZM637 544L639 549L635 545ZM632 557L634 554L635 559ZM626 557L627 554L629 558ZM431 621L434 620L432 622ZM431 621L434 616L434 620ZM416 613L412 614L411 615ZM427 609L426 611L421 611ZM425 623L427 624L421 624ZM423 617L424 619L419 620ZM424 619L423 623L419 620ZM425 623L424 619L427 620ZM449 621L444 621L448 617ZM624 561L626 557L626 561ZM622 551L624 549L623 552ZM625 551L626 549L629 551ZM627 554L625 551L629 551ZM626 549L630 548L629 551ZM413 409L416 405L416 409ZM418 406L416 405L419 402ZM416 409L418 406L420 409ZM416 405L418 406L416 409ZM417 416L418 412L420 412ZM446 225L445 223L449 223ZM454 231L450 231L453 228ZM455 240L459 239L457 242ZM462 233L461 233L458 230ZM435 248L439 246L440 250ZM449 248L445 249L444 246ZM445 249L440 250L444 246ZM458 250L455 249L457 245ZM461 248L458 250L459 247ZM460 252L458 250L461 248ZM420 226L424 228L421 230ZM424 228L425 224L429 228ZM426 243L425 242L427 241ZM423 239L425 242L421 240ZM435 245L435 248L431 245ZM435 245L439 246L435 248ZM404 423L401 425L402 420ZM407 427L407 429L404 429ZM443 607L443 610L439 610ZM440 605L443 607L439 610ZM453 604L451 604L453 601ZM453 604L457 602L457 605ZM639 549L642 549L641 554ZM627 554L630 556L629 558ZM630 556L627 554L629 551ZM442 614L439 613L443 610ZM428 622L431 621L432 622ZM444 624L446 622L449 624ZM421 406L419 402L422 401ZM403 413L401 412L404 411ZM456 234L454 231L458 230ZM456 234L461 233L459 238ZM450 243L450 240L453 240ZM459 239L463 240L463 242ZM463 240L464 238L465 242ZM446 242L450 247L444 246ZM448 250L449 252L445 252ZM429 223L431 228L429 228ZM433 225L431 228L429 223ZM433 224L429 223L429 221ZM433 224L433 225L429 223ZM446 232L443 235L444 231ZM415 426L414 427L414 423ZM408 425L410 420L412 422ZM412 422L410 420L413 419ZM410 428L407 427L408 425ZM410 428L414 427L410 429ZM407 427L410 428L407 429ZM449 618L450 614L453 618ZM449 618L453 619L449 621ZM444 607L443 607L445 605ZM447 611L444 607L449 608ZM444 621L443 616L448 617ZM437 623L438 621L438 624ZM441 619L438 621L440 617ZM435 614L430 614L430 611ZM430 614L435 614L434 616ZM400 415L400 416L399 417ZM408 412L405 415L404 411ZM449 252L450 255L445 252ZM450 255L450 255L455 257ZM448 250L445 251L445 249ZM457 251L458 250L460 252ZM431 228L428 231L429 228ZM447 237L446 232L450 235ZM461 617L461 615L463 617ZM458 255L460 255L455 257ZM458 255L457 251L460 252ZM444 227L441 231L442 226ZM438 232L439 232L437 232ZM438 228L438 232L435 227ZM445 236L443 235L446 232ZM445 236L447 237L446 241ZM437 240L439 242L436 240ZM437 240L437 236L439 237ZM438 232L432 231L435 227ZM432 231L438 232L437 232ZM429 237L431 240L428 241ZM431 240L434 236L436 240ZM432 231L434 234L431 232ZM434 234L437 236L434 236ZM635 559L638 558L635 563ZM617 561L619 564L620 565ZM400 420L402 420L399 422ZM400 420L399 417L402 420ZM403 407L404 411L400 411ZM401 427L401 425L402 427ZM638 552L638 555L635 551ZM419 624L421 624L416 624ZM419 620L419 624L416 624ZM419 624L419 620L421 624ZM414 621L416 619L416 624ZM644 546L646 542L647 544ZM417 399L419 402L416 402ZM407 404L410 402L410 405ZM411 434L407 429L410 429ZM407 429L411 434L405 432ZM459 606L456 607L457 605ZM465 612L465 611L467 607ZM467 606L464 606L463 604ZM464 606L467 606L465 611ZM430 611L427 609L432 608ZM412 617L413 619L410 615ZM457 620L460 622L455 624ZM621 562L622 563L620 565ZM626 549L625 547L630 546ZM633 551L633 548L635 551ZM417 416L420 412L418 417ZM413 418L413 419L410 417ZM412 415L413 418L410 417ZM414 397L412 398L409 397ZM417 399L415 400L414 397ZM414 401L415 400L416 402ZM444 227L450 228L447 230ZM450 231L450 228L453 228ZM455 240L453 240L456 236ZM455 240L454 244L453 240ZM461 233L464 238L459 238ZM420 226L420 226L415 226ZM413 419L417 421L414 423ZM417 421L417 422L414 423ZM413 418L417 421L413 419ZM409 417L409 415L410 417ZM405 432L410 436L405 438ZM410 436L411 434L413 433ZM402 428L403 432L401 427ZM445 605L445 603L449 603ZM639 549L633 548L635 545ZM639 549L638 552L635 551ZM626 557L621 558L625 556ZM627 554L626 557L625 556ZM626 561L632 562L630 564ZM629 558L632 562L626 561ZM434 620L433 624L432 622ZM444 615L447 611L448 617ZM431 621L427 620L429 616ZM416 613L414 616L412 614ZM426 611L424 614L421 611ZM423 623L425 623L421 624ZM425 617L424 619L423 617ZM451 624L455 622L455 624ZM619 556L622 551L623 552ZM621 558L619 556L623 552ZM619 556L621 558L617 561ZM621 558L624 561L621 562ZM622 563L624 561L624 565ZM626 557L624 561L621 558ZM625 551L624 549L626 549ZM633 551L630 548L633 548ZM633 548L630 548L630 546ZM416 405L413 409L410 405ZM416 411L413 409L416 409ZM450 228L446 225L449 223ZM446 225L450 228L444 227ZM450 243L454 244L454 246ZM439 246L441 245L440 250ZM460 255L460 252L464 252ZM459 247L458 250L457 245ZM425 224L424 228L420 226ZM425 242L426 243L421 240ZM439 246L435 245L437 244ZM418 236L423 235L421 240ZM418 229L415 231L415 230ZM418 236L415 231L417 235ZM420 226L416 227L415 226ZM425 237L423 235L424 235ZM423 235L425 237L423 239ZM404 423L407 427L402 427ZM453 608L451 611L449 608ZM443 607L440 605L442 603ZM445 605L443 607L442 603ZM642 549L639 546L644 546ZM642 549L639 549L639 546ZM632 557L630 556L634 554ZM634 560L635 559L635 563ZM439 613L442 614L440 617ZM439 613L435 614L435 610ZM435 614L437 617L434 616ZM437 617L439 613L440 617ZM427 614L425 617L424 614ZM449 621L453 619L451 624ZM421 406L420 412L420 409ZM446 232L444 231L447 230ZM461 233L456 234L458 230ZM450 235L453 234L450 236ZM453 234L456 234L456 236ZM456 234L453 234L454 231ZM450 247L455 249L449 248ZM450 247L449 248L444 246ZM463 240L459 239L459 238ZM443 242L446 242L444 246ZM450 240L446 242L446 241ZM450 255L449 252L452 253ZM456 255L455 257L452 253ZM431 228L433 225L435 227ZM414 427L415 426L415 427ZM414 427L412 422L414 423ZM450 614L449 618L448 617ZM449 618L449 621L448 617ZM459 612L454 611L456 607ZM457 620L461 619L460 622ZM459 616L461 619L457 620ZM461 615L465 612L463 617ZM443 616L442 614L444 615ZM443 616L444 615L448 617ZM438 621L441 622L438 624ZM441 622L438 621L441 619ZM400 416L403 417L402 420ZM405 415L403 417L403 413ZM409 417L405 415L409 415ZM450 255L450 255L449 252ZM458 250L457 251L455 249ZM457 251L456 255L452 253ZM433 224L438 227L435 227ZM438 227L438 228L435 227ZM433 243L436 240L437 244ZM406 421L404 423L402 420ZM403 417L406 421L402 420ZM406 421L410 420L408 425ZM410 420L406 421L409 417ZM452 613L450 614L451 611ZM456 613L459 616L453 618ZM461 619L461 617L463 617ZM464 606L462 611L459 606ZM457 251L458 255L456 255ZM456 255L458 255L455 257ZM443 235L441 231L444 231ZM439 232L441 231L443 235ZM439 232L438 232L438 228ZM437 236L439 232L439 237ZM447 237L445 236L446 232ZM445 236L446 241L441 240ZM439 242L437 240L441 240ZM428 231L431 232L428 235ZM429 237L428 241L427 241ZM428 241L431 240L431 245ZM399 417L400 420L399 422ZM458 603L459 606L457 605ZM638 555L638 552L641 554ZM635 559L634 554L638 555ZM644 546L641 544L646 542ZM406 407L404 411L403 407ZM406 407L407 404L409 409ZM407 404L406 407L403 407ZM408 412L404 411L409 409ZM400 415L399 417L400 411ZM454 244L457 245L454 246ZM425 224L420 226L424 223ZM421 230L424 230L424 235ZM403 432L405 432L405 438ZM414 616L413 619L412 617ZM420 616L423 617L419 620ZM419 620L423 623L421 624ZM623 552L627 554L625 556ZM634 554L633 551L635 551ZM417 416L413 418L412 415ZM416 411L416 409L420 409ZM412 398L415 400L414 401ZM419 402L419 398L422 401ZM417 399L419 398L419 402ZM409 415L412 415L410 417ZM409 415L408 412L412 412ZM453 228L454 226L458 230ZM459 247L463 242L463 246ZM463 242L459 247L457 245ZM459 238L455 240L456 236ZM454 244L455 240L457 242ZM464 238L466 243L465 242ZM440 250L441 245L444 246ZM465 250L461 248L463 246ZM460 252L461 248L464 252ZM457 245L455 249L454 246ZM412 422L413 419L414 423ZM411 434L410 436L405 432ZM435 610L437 607L439 610ZM440 605L437 607L437 606ZM445 603L445 605L442 603ZM457 602L453 601L458 603ZM451 600L451 604L449 603ZM462 604L464 606L459 606ZM633 548L639 549L635 551ZM626 557L629 558L626 561ZM434 616L431 621L429 616ZM424 619L425 623L423 623ZM424 619L425 617L427 620ZM455 622L457 620L455 624ZM449 621L451 624L449 624ZM624 549L622 551L625 547ZM625 551L627 554L623 552ZM630 548L633 551L629 551ZM410 405L413 409L409 409ZM413 409L412 412L409 409ZM413 409L416 411L412 412ZM418 412L417 416L412 415ZM446 225L444 227L445 223ZM454 231L453 228L458 230ZM454 244L450 243L453 240ZM446 241L443 242L441 240ZM424 228L420 226L420 226ZM425 242L423 239L427 241ZM418 229L416 227L420 226ZM428 235L425 237L424 235ZM417 422L415 426L414 423ZM415 427L415 426L417 422ZM451 604L453 608L449 608ZM459 616L457 620L453 618ZM630 556L632 557L629 558ZM633 551L630 556L629 551ZM634 560L632 557L635 559ZM634 560L632 562L632 557ZM444 615L442 614L443 610ZM441 622L441 619L444 621ZM431 621L428 622L427 620ZM428 622L425 623L427 620ZM428 622L433 624L427 624ZM433 624L428 622L432 622ZM435 614L434 610L435 610ZM434 616L437 617L434 620ZM437 617L435 614L439 613ZM416 613L420 615L420 616ZM424 614L420 615L421 611ZM420 615L424 614L420 616ZM427 614L426 611L430 611ZM426 611L427 614L424 614ZM457 620L453 619L453 618ZM455 622L453 619L457 620ZM453 619L455 622L451 624ZM446 622L449 621L449 624ZM449 621L446 622L444 621ZM418 406L421 406L420 409ZM401 412L400 415L400 411ZM450 231L446 232L447 230ZM456 234L459 238L456 236ZM453 234L450 235L450 231ZM454 231L453 234L450 231ZM453 234L453 240L450 236ZM450 247L450 243L454 246ZM453 240L450 240L450 236ZM464 238L463 240L459 238ZM450 247L446 242L450 243ZM449 252L448 250L449 248ZM448 250L445 249L449 248ZM419 234L421 230L424 235ZM423 235L419 234L424 235ZM433 225L433 224L435 227ZM414 427L413 433L410 429ZM414 427L415 427L413 433ZM410 420L409 417L410 417ZM413 419L410 420L410 417ZM407 429L410 428L410 429ZM414 427L410 428L412 422ZM453 608L454 611L451 611ZM443 607L444 607L443 610ZM644 549L642 549L644 546ZM641 554L644 549L647 544ZM441 622L443 624L438 624ZM427 614L430 614L429 616ZM430 614L427 614L430 611ZM403 417L400 416L403 413ZM399 417L400 416L402 420ZM409 415L405 415L408 412ZM403 417L405 415L409 417ZM405 415L403 413L404 411ZM445 251L448 250L445 252ZM445 251L445 252L440 250ZM455 249L457 251L452 253ZM447 237L450 235L450 236ZM435 245L433 243L437 244ZM456 613L454 611L459 612ZM452 613L456 613L453 618ZM461 615L461 617L459 616ZM462 611L464 606L465 611ZM462 611L459 612L459 606ZM444 231L441 231L444 227ZM441 231L439 232L438 228ZM439 232L437 236L437 232ZM434 236L437 236L436 240ZM437 236L437 240L436 240ZM429 237L425 237L428 235ZM432 231L428 231L431 228ZM432 231L431 232L428 231ZM433 243L431 240L436 240ZM431 240L429 237L434 236ZM437 236L434 234L437 232Z"/></g>
</svg>
<div class="lg" style="top:48px;color:#fff;letter-spacing:0.75px">X-Velocity</div>
<div class="lg" style="left:4px;top:71px;color:#ff0000">2.038E+01</div>
<div class="lg" style="left:4px;top:94px;color:#ff4000">1.857E+01</div>
<div class="lg" style="left:4px;top:117px;color:#ff4c10">1.677E+01</div>
<div class="lg" style="left:4px;top:140px;color:#ff8000">1.496E+01</div>
<div class="lg" style="left:4px;top:163px;color:#f0a000">1.316E+01</div>
<div class="lg" style="left:4px;top:186px;color:#f0a000">1.136E+01</div>
<div class="lg" style="left:4px;top:209px;color:#a8f000">9.551E+00</div>
<div class="lg" style="left:4px;top:232px;color:#f0e400">7.747E+00</div>
<div class="lg" style="left:4px;top:256px;color:#c8e000">5.942E+00</div>
<div class="lg" style="left:4px;top:279px;color:#40f000">4.138E+00</div>
<div class="lg" style="left:4px;top:302px;color:#00f000">2.333E+00</div>
<div class="lg" style="left:4px;top:325px;color:#20d0c8">5.289E-01</div>
<div class="lg" style="left:0px;top:348px;color:#18b0e0">-1.275E+00</div>
<div class="lg" style="left:0px;top:371px;color:#1870f0">-3.080E+00</div>
<div class="lg" style="left:0px;top:394px;color:#2050f0">-4.884E+00</div>
<div class="lg" style="left:0px;top:417px;color:#0010ff">-6.689E+00</div>

<div class="a" style="left:845px;top:47px;color:#fff;font-size:16px;line-height:18px">R</div>
<div class="a" style="left:849px;top:74px;width:4px;height:1px;background:#fff"></div>
<div id="tb" class="a">
  <div class="tbtn" style="left:0"></div>
  <div class="tbtn" style="left:23px"></div>
  <div class="tbtn" style="left:46px"></div>
  <div class="tbtn" style="left:69px"></div>
  <div class="fld" style="left:251px;width:79px">B1</div>
  <div class="fld" style="left:351px;width:149px">BLOCKAGE</div>
</div>
<svg class="a" width="100" height="45" style="left:0;top:0" shape-rendering="crispEdges">
 <!-- new doc -->
 <path d="M7.5 8.5H14.5L17.5 11.5V20.5H7.5Z" fill="none" stroke="#fff" stroke-width="1"/>
 <path d="M6.5 7.5H13.5L16.5 10.5V19.5H6.5Z" fill="none" stroke="#808080" stroke-width="1"/>
 <rect x="14" y="9" width="1" height="1" fill="#fff"/>
 <!-- open folder -->
 <path d="M27 11H35L36 12H42L38 20H27Z" fill="#808080"/>
 <path d="M28 21H38L43 15" fill="none" stroke="#fff" stroke-width="1"/>
 <path d="M28 12h1M30 12h1M29 13h1M31 13h1M28 14h1M30 14h1M29 15h1M28 16h1M28 18h1" stroke="#fff" stroke-width="1"/>
 <path d="M36 8h3l2 2" fill="none" stroke="#808080"/>
 <path d="M37 9h3l2 2" fill="none" stroke="#fff"/>
 <!-- save -->
 <rect x="50" y="7" width="14" height="14" fill="#808080"/>
 <path d="M51 22H65V8" fill="none" stroke="#fff"/>
 <rect x="53" y="8" width="8" height="6" fill="#c0c0c0"/>
 <path d="M53 14V8H61" fill="none" stroke="#fff"/>
 <rect x="59" y="17" width="2" height="3" fill="#fff"/>
 <rect x="62" y="8" width="1" height="1" fill="#fff"/>
 <!-- printer -->
 <path d="M75 8H86L84 14H72Z" fill="#fff" stroke="#000" stroke-width="1"/>
 <path d="M77 10H83M76 12H82" stroke="#000"/>
 <path d="M72 13H86L89 16V20L87 22H73L72 20Z" fill="#000"/>
 <rect x="73" y="14" width="13" height="1" fill="#fff"/>
 <rect x="73" y="16" width="13" height="2" fill="#c0c0c0"/>
 <rect x="79" y="17" width="3" height="1" fill="#e0c800"/>
 <rect x="74" y="19" width="12" height="1" fill="#c0c0c0"/>
 <path d="M87 15h1M88 17h1M87 19h1" stroke="#fff"/>
</svg>

<div id="sb" class="a"><div id="sbf">Ready</div></div>
<div id="pn" class="a" style="left:851px;top:-4px;width:163px;height:423px;background:#808080;border:0"></div>
<div class="a" style="left:851px;top:0;width:1px;height:419px;background:#dfdfdf"></div>
<div class="a" style="left:852px;top:0;width:1px;height:419px;background:#fff"></div>
<div class="a" style="left:853px;top:0;width:2px;height:416px;background:#c0c0c0"></div>
<div class="a" style="left:1011px;top:0;width:3px;height:419px;background:#c0c0c0"></div>
<div class="a" style="left:853px;top:416px;width:161px;height:3px;background:#c0c0c0"></div>
<div class="a" style="left:1014px;top:0;width:1px;height:45px;background:#000"></div>
<div class="b p" style="left:865px;top:4px;width:20px;height:20px"></div>
<div class="b" style="left:895px;top:4px;width:20px;height:20px"></div>
<div class="b" style="left:925px;top:4px;width:20px;height:20px"></div>
<div class="b" style="left:955px;top:4px;width:20px;height:20px"></div>
<div class="b" style="left:865px;top:34px;width:20px;height:20px"></div>
<div class="b" style="left:955px;top:34px;width:20px;height:20px"></div>
<div class="b p" style="left:865px;top:74px;width:20px;height:20px"></div>
<div class="b" style="left:895px;top:74px;width:20px;height:20px"></div>
<div class="b" style="left:925px;top:74px;width:20px;height:20px"></div>
<div class="b p" style="left:955px;top:74px;width:20px;height:20px"></div>
<div class="b" style="left:865px;top:104px;width:20px;height:20px"></div>
<div class="b" style="left:895px;top:104px;width:20px;height:20px"></div>
<div class="b" style="left:925px;top:104px;width:20px;height:20px"></div>
<div class="b p" style="left:955px;top:104px;width:20px;height:20px"></div>
<div class="b" style="left:865px;top:134px;width:20px;height:20px"></div>
<div class="b p" style="left:895px;top:134px;width:20px;height:20px"></div>
<div class="b" style="left:925px;top:134px;width:20px;height:20px"></div>
<div class="b" style="left:955px;top:134px;width:20px;height:20px"></div>
<div class="b" style="left:865px;top:164px;width:20px;height:20px"></div>
<div class="b" style="left:895px;top:164px;width:20px;height:20px"></div>
<div class="b" style="left:925px;top:164px;width:20px;height:20px"></div>
<div class="b p" style="left:955px;top:164px;width:20px;height:20px"></div>
<div class="b" style="left:870px;top:204px;width:20px;height:20px"></div>
<div class="b" style="left:890px;top:204px;width:20px;height:20px"></div>
<div class="b" style="left:870px;top:234px;width:20px;height:20px"></div>
<div class="b" style="left:890px;top:234px;width:20px;height:20px"></div>
<div class="b" style="left:870px;top:264px;width:20px;height:20px"></div>
<div class="b" style="left:890px;top:264px;width:20px;height:20px"></div>
<div class="b" style="left:925px;top:204px;width:50px;height:20px"></div>
<div class="b" style="left:940px;top:234px;width:20px;height:20px"></div>
<div class="b" style="left:940px;top:264px;width:20px;height:20px"></div>
<div class="a" style="left:860px;top:326px;color:#fff;font-size:16px;line-height:18px;transform:scaleX(1.15);transform-origin:0 0">X</div>
<div class="a pf" style="left:875px;top:324px">0.730000</div>
<div class="a sp" style="left:946px;top:324px"></div>
<div class="a sp" style="left:966px;top:324px"></div>
<div class="a" style="left:860px;top:351px;color:#fff;font-size:16px;line-height:18px;transform:scaleX(1.15);transform-origin:0 0">Y</div>
<div class="a pf" style="left:875px;top:349px">0.487500</div>
<div class="a sp" style="left:946px;top:349px"></div>
<div class="a sp" style="left:966px;top:349px"></div>
<div class="a" style="left:860px;top:376px;color:#fff;font-size:16px;line-height:18px;transform:scaleX(1.15);transform-origin:0 0">Z</div>
<div class="a pf" style="left:875px;top:374px">0.483333</div>
<div class="a sp" style="left:946px;top:374px"></div>
<div class="a sp" style="left:966px;top:374px"></div>
<div class="a" style="left:876px;top:306px;color:#fff;font-size:16px;line-height:18px;letter-spacing:0.95px;white-space:nowrap">Probe position</div>
<div class="a" style="left:926px;top:206px;width:48px;height:20px;font-family:'Liberation Mono',monospace;font-weight:bold;font-size:12.5px;line-height:20px;letter-spacing:1.2px;color:#000">Reset</div>
<svg class="a" width="1024" height="660" style="left:0;top:0"><text x="905.0" y="147.2" text-anchor="middle" font-family="Liberation Serif" font-weight="bold" font-size="13.5">X</text><text x="935.0" y="147.2" text-anchor="middle" font-family="Liberation Serif" font-weight="bold" font-size="13.5">Y</text><text x="965.0" y="147.2" text-anchor="middle" font-family="Liberation Serif" font-weight="bold" font-size="13.5">Z</text><text x="875.0" y="177.2" text-anchor="middle" font-family="Liberation Serif" font-weight="bold" font-size="13.5">P</text><text x="905.0" y="177.2" text-anchor="middle" font-family="Liberation Serif" font-weight="bold" font-size="13.5">T</text><text x="935.0" y="177.2" text-anchor="middle" font-family="Liberation Serif" font-weight="bold" font-size="13.5">V</text><text x="965.0" y="177.2" text-anchor="middle" font-family="Liberation Serif" font-weight="bold" font-size="13.5">C</text><g transform="translate(865,4)" stroke="#000" fill="none" shape-rendering="crispEdges"><path d="M10 4V11H16M4 15L10 11" /><path d="M4 5h3L4 8h3" stroke-width="1"/><path d="M12 5v2h3M15 5v4h-3" /><path d="M7 12l4 3M11 12l-4 3"/></g><g transform="translate(895,4)"><path d="M9 5L4.5 15M10 5L14.5 15" stroke="#000" stroke-width="1.3" fill="none"/><rect x="8.5" y="4" width="2" height="2" fill="#000"/><ellipse cx="9.5" cy="12.5" rx="2.5" ry="1.3" fill="#00c0e0"/><path d="M7 13.5h5" stroke="#000"/></g><g transform="translate(925,4)" stroke="#000" shape-rendering="crispEdges"><path d="M4.5 5V15M7.5 5V15M10.5 5V15M13.5 5V15M4 6.5H15M4 9.5H15M4 12.5H15M4 14.5H15"/></g><g transform="translate(955,4)" stroke="#000" fill="none" shape-rendering="crispEdges"><rect x="7.5" y="4.5" width="4" height="3"/><rect x="6.5" y="7.5" width="6" height="3"/><path d="M5.5 10.5H13.5L14.5 14.5H4.5Z"/></g><g transform="translate(865,34)" fill="none" shape-rendering="crispEdges"><rect x="7.5" y="7.5" width="8" height="8" stroke="#000" stroke-width="1"/><path d="M3 5h1M5 5h1M3 7h1M5 7h1" stroke="#000"/></g><g transform="translate(955,34)" fill="none" shape-rendering="crispEdges"><rect x="4.5" y="4.5" width="10" height="10" stroke="#000" stroke-width="1"/></g><g transform="translate(865,74)"><path d="M10 4.5L13 5.5L10 14.5L6.5 13.5Z" fill="#ff0000" stroke="#000" stroke-width="1"/></g><g transform="translate(895,74)" fill="none" stroke="#000" stroke-width="1"><path d="M12 5c2 1 0 3-1 4s0 2-2 3-2 2-1 3 2-1 1-2"/></g><g transform="translate(925,74)" fill="none" shape-rendering="crispEdges"><path d="M2.5 7.5H12.5V15.5H2.5ZM2.5 7.5L5.5 4.5H15.5L12.5 7.5M15.5 4.5V12.5L12.5 15.5" stroke="#000"/><path d="M8.5 7.5V15.5M8.5 7.5L11.5 4.5" stroke="#ff0000"/></g><g transform="translate(955,74)" fill="none" shape-rendering="crispEdges"><path d="M5.5 8.5H11.5V13.5H5.5ZM5.5 8.5L7.5 6.5H13.5L11.5 8.5M13.5 6.5V11.5L11.5 13.5" stroke="#000"/><path d="M8.5 8.5V13.5M8.5 8.5L10.5 6.5" stroke="#ff0000"/></g><g transform="translate(865,104)"><path d="M6 14L13 7" stroke="#000" stroke-width="1.2"/><path d="M9 6H14V11Z" fill="#000"/></g><g transform="translate(895,104)" fill="none" stroke-width="1"><path d="M12 5c2 1 0 3-1 4s0 2-2 3-2 2-1 3 2-1 1-2" stroke="#000"/><path d="M2 3L17 16M17 3L2 16" stroke="#ff0000"/></g><g transform="translate(925,104)" fill="none"><path d="M2.5 7.5H12.5V15.5H2.5ZM2.5 7.5L5.5 4.5H15.5L12.5 7.5M15.5 4.5V12.5L12.5 15.5" stroke="#000"/><path d="M8.5 4.5V15.5M2 3L17 16M17 3L2 16" stroke="#ff0000"/></g><g transform="translate(955,104)" shape-rendering="crispEdges"><rect x="5" y="6" width="6" height="2" fill="#ff0000"/><rect x="11" y="6" width="3" height="2" fill="#000"/><rect x="5" y="9" width="5" height="2" fill="#00ff00"/><rect x="10" y="9" width="4" height="2" fill="#000"/><rect x="5" y="12" width="6" height="2" fill="#008080"/><rect x="11" y="12" width="3" height="2" fill="#000"/></g><g transform="translate(865,134)" fill="none" stroke="#000"><path d="M5 13c0-2 2-3 4-3s3-2 4-3 1-2 1 1-2 3-4 4-2 3-4 2" stroke-width="1.4"/><path d="M7 11l2 2M9 10l2 2M11 9l2 2"/></g><g transform="translate(870,204)" fill="#000" stroke="#000"><path d="M6 13.5L12 7.5" stroke-width="3"/><path d="M8 4H15V12Z" stroke="none"/><path d="M4.5 12L7.5 15" stroke-width="1.5"/></g><g transform="translate(890,204)" fill="#000" stroke="#000"><path d="M14 5L8 11" stroke-width="3"/><path d="M5 8V15H12Z" stroke="none"/><path d="M12.5 3.5L15.5 6.5" stroke-width="1.5"/></g><g transform="translate(870,234)" fill="#000" stroke="#000"><path d="M14.5 3.5V9.5Q14.5 11.5 12.5 11.5H7" stroke-width="3" fill="none"/><path d="M8 6.5V16L2 11.2Z" stroke="none"/></g><g transform="translate(890,234)" fill="#000" stroke="#000"><path d="M4.5 3.5V9.5Q4.5 11.5 6.5 11.5H12" stroke-width="3" fill="none"/><path d="M11 6.5V16L17 11.2Z" stroke="none"/></g><g transform="translate(940,234)" fill="#000" stroke="#000"><path d="M8 7V13Q8 15.3 10.3 15.3H15" stroke-width="3" fill="none"/><path d="M3.5 8.5L8 3L12.5 8.5Z" stroke="none"/></g><g transform="translate(940,264)" fill="#000" stroke="#000"><path d="M15 4.5H10.3Q8 4.5 8 6.8V12" stroke-width="3" fill="none"/><path d="M3.5 11L8 17L12.5 11Z" stroke="none"/></g><g transform="translate(870,264)" fill="#000" stroke="#000"><path d="M4 5L12 12.5L15.5 8.5" stroke-width="3" fill="none"/><path d="M2 3H9L2 9Z" stroke="none"/></g><g transform="translate(890,264)" fill="#000" stroke="#000"><path d="M3.5 9L7 12.5L14.5 5" stroke-width="3" fill="none"/><path d="M10 3H17V10Z" stroke="none"/></g><path d="M957 329 L951 333 L957 338 Z" fill="#404040"/><path d="M972 329 L978 333 L972 338 Z" fill="#404040"/><path d="M957 354 L951 358 L957 363 Z" fill="#404040"/><path d="M972 354 L978 358 L972 363 Z" fill="#404040"/><path d="M957 379 L951 383 L957 388 Z" fill="#404040"/><path d="M972 379 L978 383 L972 388 Z" fill="#404040"/></svg>
</body></html>
